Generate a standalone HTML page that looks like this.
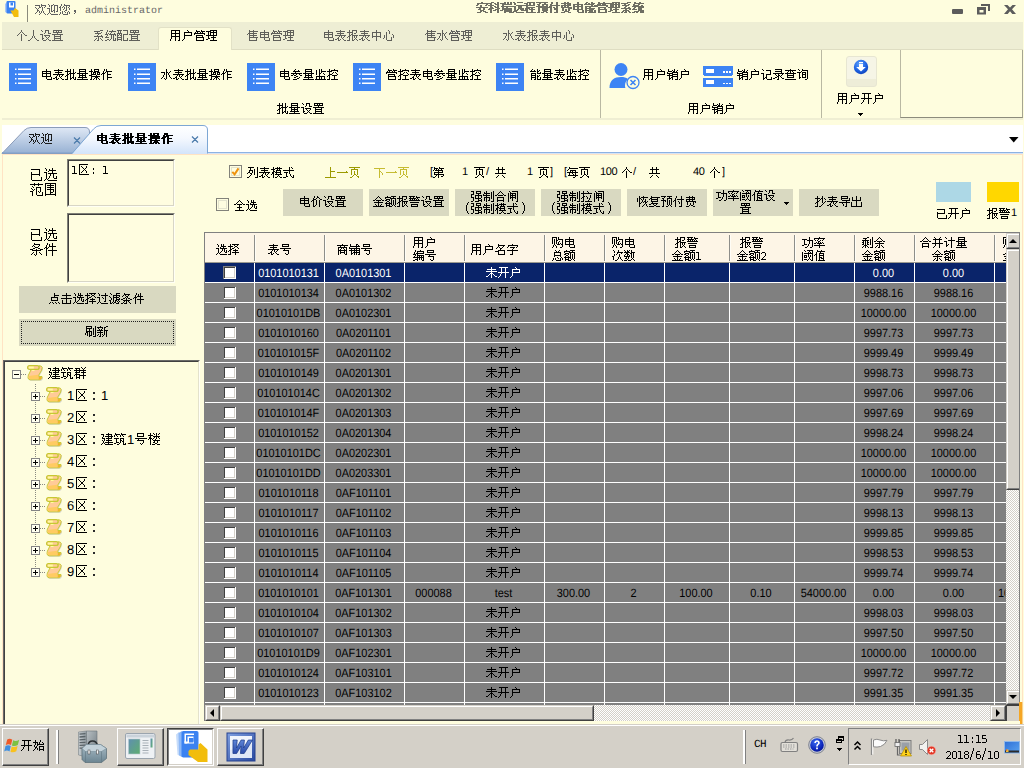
<!DOCTYPE html>
<html lang="zh-CN"><head><meta charset="utf-8"><title>安科瑞远程预付费电能管理系统</title>
<style>
html,body{margin:0;padding:0}
body{width:1024px;height:768px;overflow:hidden;background:#fefdde;position:relative;font-family:"Liberation Sans",sans-serif;font-size:12px}
div,span.h,svg.i{position:absolute;box-sizing:border-box}
.h{position:absolute;font-size:0;color:transparent;width:0;height:0;overflow:hidden;white-space:nowrap}
.l{white-space:nowrap;overflow:hidden;text-rendering:geometricPrecision}
#ov{position:absolute;left:0;top:0;pointer-events:none}
</style></head>
<body>
<svg class="i" style="left:3px;top:0px" width="18" height="19" viewBox="0 0 18 19">
<path d="M2 4l2-2v11l-2-1z" fill="#a9c8f6"/>
<rect x="3.5" y="1" width="9" height="12.5" rx="1" fill="#3b82f1"/>
<rect x="6" y="2.5" width="5" height="5" fill="#fff"/><rect x="7.5" y="2.5" width="2.5" height="3" fill="#3b82f1"/>
<path d="M7.5 10.5l3 0 1.5-2.5 3.5 2.5v6.5h-4.500z" fill="#f2bd0c"/>
</svg>
<div style="left:27px;top:5px;width:1px;height:17px;background:#8a8a7c;"></div>
<span class="h" style="left:35px;top:4px">欢迎您，</span>
<div class="l" style="left:85px;top:5px;width:90px;height:13px;line-height:13px;font-size:10px;color:#686868;text-align:left;font-family:'Liberation Mono',sans-serif;">administrator</div>
<span class="h" style="left:476px;top:2px">安科瑞远程预付费电能管理系统</span>
<svg class="i" style="left:948px;top:0px" width="72" height="20" viewBox="0 0 72 20">
<rect x="4" y="9" width="11" height="5" rx="1" fill="#5c5c5c"/>
<path d="M33 4h9v7h-2v-5h-7z M29 7h9v7.500h-9z M31.500 10v2.500h4v-2.500z" fill="#5c5c5c" fill-rule="evenodd"/>
<path d="M56 5l3.500 0 2.500 2.500 2.500-2.500 3.500 0-4 4.300 4 4.700-3.700 0-2.300-2.800-2.300 2.800-3.700 0 4-4.700z" fill="#5c5c5c"/>
</svg>
<div style="left:2px;top:22px;width:1021px;height:28px;background:#eeeed4;border-bottom:1px solid #deddc2;"></div>
<div style="left:158px;top:27px;width:74px;height:23px;background:#fefdde;border:1px solid #e2e1c6;border-bottom:none;border-radius:3px 3px 0 0;"></div>
<span class="h" style="left:16px;top:30px">个人设置</span>
<span class="h" style="left:93px;top:30px">系统配置</span>
<span class="h" style="left:170px;top:30px">用户管理</span>
<span class="h" style="left:247px;top:30px">售电管理</span>
<span class="h" style="left:323px;top:30px">电表报表中心</span>
<span class="h" style="left:425px;top:30px">售水管理</span>
<span class="h" style="left:503px;top:30px">水表报表中心</span>
<div style="left:2px;top:118px;width:1021px;height:2px;background:#efeed3;"></div>
<svg class="i" style="left:9px;top:63px" width="28" height="28" viewBox="0 0 28 28" ><rect width="28" height="28" fill="#3d84f4"/><path d="M6 5.500h1.500v1.500h-1.500zM9 5.500h13v1.500h-13zM6 10.500h1.500v1.500h-1.500zM9 10.500h13v1.500h-13zM6 15h1.500v1.500h-1.500zM9 15h13v1.500h-13zM6 19.500h1.500v1.500h-1.500zM9 19.500h13v1.500h-13z" fill="#fff"/></svg>
<span class="h" style="left:41px;top:69px">电表批量操作</span>
<svg class="i" style="left:128px;top:63px" width="28" height="28" viewBox="0 0 28 28" ><rect width="28" height="28" fill="#3d84f4"/><path d="M6 5.500h1.500v1.500h-1.500zM9 5.500h13v1.500h-13zM6 10.500h1.500v1.500h-1.500zM9 10.500h13v1.500h-13zM6 15h1.500v1.500h-1.500zM9 15h13v1.500h-13zM6 19.500h1.500v1.500h-1.500zM9 19.500h13v1.500h-13z" fill="#fff"/></svg>
<span class="h" style="left:161px;top:69px">水表批量操作</span>
<svg class="i" style="left:247px;top:63px" width="28" height="28" viewBox="0 0 28 28" ><rect width="28" height="28" fill="#3d84f4"/><path d="M6 5.500h1.500v1.500h-1.500zM9 5.500h13v1.500h-13zM6 10.500h1.500v1.500h-1.500zM9 10.500h13v1.500h-13zM6 15h1.500v1.500h-1.500zM9 15h13v1.500h-13zM6 19.500h1.500v1.500h-1.500zM9 19.500h13v1.500h-13z" fill="#fff"/></svg>
<span class="h" style="left:279px;top:69px">电参量监控</span>
<svg class="i" style="left:353px;top:63px" width="28" height="28" viewBox="0 0 28 28" ><rect width="28" height="28" fill="#3d84f4"/><path d="M6 5.500h1.500v1.500h-1.500zM9 5.500h13v1.500h-13zM6 10.500h1.500v1.500h-1.500zM9 10.500h13v1.500h-13zM6 15h1.500v1.500h-1.500zM9 15h13v1.500h-13zM6 19.500h1.500v1.500h-1.500zM9 19.500h13v1.500h-13z" fill="#fff"/></svg>
<span class="h" style="left:386px;top:69px">管控表电参量监控</span>
<svg class="i" style="left:496px;top:63px" width="28" height="28" viewBox="0 0 28 28" ><rect width="28" height="28" fill="#3d84f4"/><path d="M6 5.500h1.500v1.500h-1.500zM9 5.500h13v1.500h-13zM6 10.500h1.500v1.500h-1.500zM9 10.500h13v1.500h-13zM6 15h1.500v1.500h-1.500zM9 15h13v1.500h-13zM6 19.500h1.500v1.500h-1.500zM9 19.500h13v1.500h-13z" fill="#fff"/></svg>
<span class="h" style="left:530px;top:69px">能量表监控</span>
<span class="h" style="left:277px;top:103px">批量设置</span>
<div style="left:600px;top:50px;width:1px;height:68px;background:#b9b8a2;"></div>
<svg class="i" style="left:609px;top:62px" width="33" height="28" viewBox="0 0 33 28">
<circle cx="12" cy="7.500" r="6.500" fill="#3d84f4"/>
<path d="M0.500 26c0-8 5-11 11.500-11 3 0 5 .6 7 2-2 2-3 4-3 6.500 0 .9.100 1.700.400 2.500z" fill="#3d84f4"/>
<circle cx="24" cy="20.500" r="6" fill="#fefdde" stroke="#3d84f4" stroke-width="1.300"/>
<path d="M21.500 18l5 5M26.500 18l-5 5" stroke="#3d84f4" stroke-width="1.600"/>
</svg>
<span class="h" style="left:643px;top:69px">用户销户</span>
<svg class="i" style="left:703px;top:66px" width="31" height="22" viewBox="0 0 31 22" shape-rendering="crispEdges">
<rect x="0" y="0" width="30" height="9.500" rx="1" fill="#3d84f4"/><rect x="0" y="11.500" width="30" height="9.500" rx="1" fill="#3d84f4"/>
<rect x="3" y="2.500" width="8" height="4" fill="#fff"/><rect x="3" y="14" width="8" height="4" fill="#fff"/>
<path d="M20 5h1.500v1.500h-1.500zM23 5h1.500v1.500h-1.500zM26 5h1.500v1.500h-1.500zM20 16.500h1.500v1.500h-1.500zM23 16.500h1.500v1.500h-1.500zM26 16.500h1.500v1.500h-1.500z" fill="#fff"/>
</svg>
<span class="h" style="left:737px;top:69px">销户记录查询</span>
<span class="h" style="left:688px;top:103px">用户销户</span>
<div style="left:821px;top:50px;width:1px;height:68px;background:#b9b8a2;"></div>
<div style="left:846px;top:56px;width:31px;height:31px;background:#f5f4e4;border:1px solid #e7e6d2;border-radius:3px;background:linear-gradient(#f6f5e6 0,#f6f5e6 74%,#eeedd8 76%,#eeedd8 100%);"></div>
<svg class="i" style="left:853px;top:59px" width="16" height="16" viewBox="0 0 16 16">
<defs><radialGradient id="bl" cx="0.400" cy="0.300" r="0.800"><stop offset="0" stop-color="#5aa0ff"/><stop offset="0.600" stop-color="#1c5fe0"/><stop offset="1" stop-color="#0a3ab0"/></radialGradient></defs>
<circle cx="8" cy="8" r="7.200" fill="url(#bl)"/>
<path d="M6 3h4v1.200h-4zM6 5h4v3h2.800l-4.800 4.600-4.800-4.600h2.800z" fill="#fff"/></svg>
<span class="h" style="left:837px;top:93px">用户开户</span>
<svg class="i" style="left:858px;top:113px" width="6" height="4" viewBox="0 0 6 4" shape-rendering="crispEdges"><path d="M0 0h5l-2.500 3z" fill="#000"/></svg>
<div style="left:900px;top:50px;width:123px;height:68px;border-left:1px solid #b9b8a2;border-right:1px solid #a5a492;border-bottom:1px solid #8c8b7c;"></div>
<div style="left:2px;top:125px;width:1021px;height:28px;background:#fff;"></div>
<div style="left:2px;top:152px;width:1021px;height:1px;background:#8db2e3;"></div>
<div style="left:2px;top:153px;width:1021px;height:1px;background:#d6e4f5;"></div>
<svg class="i" style="left:0px;top:122px" width="212" height="33" viewBox="0 0 212 33">
<defs><linearGradient id="ti" x1="0" y1="0" x2="0" y2="1"><stop offset="0" stop-color="#dfe8f5"/><stop offset="1" stop-color="#97b1d3"/></linearGradient>
<linearGradient id="ta" x1="0" y1="0" x2="0" y2="1"><stop offset="0" stop-color="#ffffff"/><stop offset="0.450" stop-color="#f4f8fe"/><stop offset="1" stop-color="#d3e4fa"/></linearGradient></defs>
<path d="M2 31.500L24 8.500Q27 5.500 31 5.500L85 5.500Q89.500 5.500 89.500 10L89.500 31.500Z" fill="url(#ti)" stroke="#8b9cb9" stroke-width="1"/>
<path d="M2 31h88" stroke="#7f9fca" stroke-width="1"/>
<path d="M72 32L93.500 7Q96.500 3.500 101 3.500L203 3.500Q207.500 3.500 207.500 8L207.500 32Z" fill="url(#ta)"/>
<path d="M72 31.500L93.500 7Q96.500 3.500 101 3.500L203 3.500Q207.500 3.500 207.500 8L207.500 31.500" fill="none" stroke="#7da7d4" stroke-width="1"/>
<path d="M74 15.500l6 6M80 15.500l-6 6M192 14.500l6 6M198 14.500l-6 6" stroke="#4b7bab" stroke-width="1.200" fill="none"/>
</svg>
<span class="h" style="left:29px;top:133px">欢迎</span>
<span class="h" style="left:96px;top:133px">电表批量操作</span>
<svg class="i" style="left:1009px;top:137px" width="10" height="6" viewBox="0 0 10 6"><path d="M0 0h9.500l-4.750 5.500z" fill="#000"/></svg>
<div style="left:2px;top:154px;width:1021px;height:1px;background:#ffe3c4;"></div>
<div style="left:2px;top:154px;width:1px;height:570px;background:#ffe3c4;"></div>
<span class="h" style="left:30px;top:168px">已选</span>
<span class="h" style="left:30px;top:183px">范围</span>
<div style="left:67px;top:159px;width:108px;height:48px;background:#fffde0;border-top:1px solid #808078;border-left:1px solid #808078;border-right:1px solid #fffff4;border-bottom:1px solid #fffff4;"></div>
<div style="left:68px;top:160px;width:106px;height:46px;border-top:1px solid #404040;border-left:1px solid #404040;border-right:1px solid #d8d6c6;border-bottom:1px solid #d8d6c6;"></div>
<span class="h" style="left:72px;top:164px">1区</span>
<span class="h" style="left:91px;top:164px">:</span>
<span class="h" style="left:103px;top:164px">1</span>
<span class="h" style="left:30px;top:228px">已选</span>
<span class="h" style="left:30px;top:243px">条件</span>
<div style="left:67px;top:213px;width:108px;height:70px;background:#fffde0;border-top:1px solid #808078;border-left:1px solid #808078;border-right:1px solid #fffff4;border-bottom:1px solid #fffff4;"></div>
<div style="left:68px;top:214px;width:106px;height:68px;border-top:1px solid #404040;border-left:1px solid #404040;border-right:1px solid #d8d6c6;border-bottom:1px solid #d8d6c6;"></div>
<div style="left:19px;top:286px;width:157px;height:27px;background:#d9d9c1;"></div>
<span class="h" style="left:49px;top:293px">点击选择过滤条件</span>
<div style="left:19px;top:319px;width:157px;height:27px;background:#d9d9c1;"></div>
<div style="left:21px;top:321px;width:153px;height:23px;border:1px dotted #222;"></div>
<span class="h" style="left:85px;top:326px">刷新</span>
<div style="left:3px;top:360px;width:197px;height:364px;background:#fefdde;border-top:1px solid #6a6a68;border-left:1px solid #6a6a68;border-right:1px solid #fffff6;"></div>
<div style="left:4px;top:361px;width:195px;height:363px;border-top:1px solid #404040;border-left:1px solid #404040;border-right:1px solid #e4e2cc;"></div>
<svg class="i" style="left:12px;top:370px" width="9" height="9" viewBox="0 0 9 9" shape-rendering="crispEdges"><rect x="0.500" y="0.500" width="8" height="8" fill="#fffff0" stroke="#848484"/><path d="M2 4.500h5" stroke="#000"/></svg>
<div style="left:21px;top:374px;width:6px;height:1px;background-image:linear-gradient(90deg,#8a8a80 50%,transparent 50%);background-size:2px 1px;"></div>
<svg class="i" style="left:27px;top:365px" width="17" height="17" viewBox="0 0 17 17">
<path d="M5 5.500L13 5.500L13.300 1.500Q15.600 1.200 16 3.200Q16 5.800 13.800 8.800Q12.600 10.500 12.600 12L16 12.200Q16.400 14.300 14.300 15.800L4 16Q2 15.700 1.900 13.500Q1.900 11 3.300 9Z" fill="#b9bccb" opacity=".55"/>
<path d="M4.200 4.200L12 4.200L12 .8Q14.800 .6 15.200 2.500Q15.200 5 13 8Q11.500 10 11.500 11.500L15 11.500Q15.500 13.500 13.500 14.800L3 14.800Q1 14.500 1 12.500Q1 10 2.500 8Z" fill="#ffcb98" stroke="#c9cb35" stroke-width="1"/>
<path d="M1.500 11L11.300 9.800L11.500 14.300L3.200 14.300Q1.500 14 1.500 12.500Z" fill="#ffcb62"/>
<path d="M11.600 12L14.700 12Q15 13.700 13.200 14.400L11.600 14.400Z" fill="#eeb62c"/>
<rect x=".6" y=".6" width="11.400" height="3.800" rx="1.700" fill="#ffcb98" stroke="#c6c832" stroke-width="1.200"/>
<path d="M2 1.600h4.800v1.900h-4.800z" fill="#ffff9c"/><path d="M5 5h2.500v1h-2.500z" fill="#ffff9c"/>
</svg>
<span class="h" style="left:48px;top:367px">建筑群</span>
<div style="left:35px;top:383px;width:1px;height:185px;background-image:linear-gradient(0deg,#8a8a80 50%,transparent 50%);background-size:1px 2px;"></div>
<svg class="i" style="left:31px;top:392px" width="9" height="9" viewBox="0 0 9 9" shape-rendering="crispEdges"><rect x="0.500" y="0.500" width="8" height="8" fill="#fffff0" stroke="#848484"/><path d="M2 4.500h5" stroke="#000"/><path d="M4.500 2v5" stroke="#000"/></svg>
<div style="left:40px;top:396px;width:6px;height:1px;background-image:linear-gradient(90deg,#8a8a80 50%,transparent 50%);background-size:2px 1px;"></div>
<svg class="i" style="left:46px;top:387px" width="17" height="17" viewBox="0 0 17 17">
<path d="M5 5.500L13 5.500L13.300 1.500Q15.600 1.200 16 3.200Q16 5.800 13.800 8.800Q12.600 10.500 12.600 12L16 12.200Q16.400 14.300 14.300 15.800L4 16Q2 15.700 1.900 13.500Q1.900 11 3.300 9Z" fill="#b9bccb" opacity=".55"/>
<path d="M4.200 4.200L12 4.200L12 .8Q14.800 .6 15.200 2.500Q15.200 5 13 8Q11.500 10 11.500 11.500L15 11.500Q15.500 13.500 13.500 14.800L3 14.800Q1 14.500 1 12.500Q1 10 2.500 8Z" fill="#ffcb98" stroke="#c9cb35" stroke-width="1"/>
<path d="M1.500 11L11.300 9.800L11.500 14.300L3.200 14.300Q1.500 14 1.500 12.500Z" fill="#ffcb62"/>
<path d="M11.600 12L14.700 12Q15 13.700 13.200 14.400L11.600 14.400Z" fill="#eeb62c"/>
<rect x=".6" y=".6" width="11.400" height="3.800" rx="1.700" fill="#ffcb98" stroke="#c6c832" stroke-width="1.200"/>
<path d="M2 1.600h4.800v1.900h-4.800z" fill="#ffff9c"/><path d="M5 5h2.500v1h-2.500z" fill="#ffff9c"/>
</svg>
<div class="l" style="left:67px;top:387px;width:9px;height:17px;line-height:17px;font-size:13px;color:#000;text-align:left;font-family:'Liberation Sans',sans-serif;">1</div>
<span class="h" style="left:75px;top:388px">区</span>
<div style="left:93px;top:392px;width:2px;height:2px;background:#2a2a2a;"></div>
<div style="left:93px;top:398px;width:2px;height:2px;background:#2a2a2a;"></div>
<div class="l" style="left:101px;top:387px;width:9px;height:17px;line-height:17px;font-size:13px;color:#000;text-align:left;font-family:'Liberation Sans',sans-serif;">1</div>
<svg class="i" style="left:31px;top:414px" width="9" height="9" viewBox="0 0 9 9" shape-rendering="crispEdges"><rect x="0.500" y="0.500" width="8" height="8" fill="#fffff0" stroke="#848484"/><path d="M2 4.500h5" stroke="#000"/><path d="M4.500 2v5" stroke="#000"/></svg>
<div style="left:40px;top:418px;width:6px;height:1px;background-image:linear-gradient(90deg,#8a8a80 50%,transparent 50%);background-size:2px 1px;"></div>
<svg class="i" style="left:46px;top:409px" width="17" height="17" viewBox="0 0 17 17">
<path d="M5 5.500L13 5.500L13.300 1.500Q15.600 1.200 16 3.200Q16 5.800 13.800 8.800Q12.600 10.500 12.600 12L16 12.200Q16.400 14.300 14.300 15.800L4 16Q2 15.700 1.900 13.500Q1.900 11 3.300 9Z" fill="#b9bccb" opacity=".55"/>
<path d="M4.200 4.200L12 4.200L12 .8Q14.800 .6 15.200 2.500Q15.200 5 13 8Q11.500 10 11.500 11.500L15 11.500Q15.500 13.500 13.500 14.800L3 14.800Q1 14.500 1 12.500Q1 10 2.500 8Z" fill="#ffcb98" stroke="#c9cb35" stroke-width="1"/>
<path d="M1.500 11L11.300 9.800L11.500 14.300L3.200 14.300Q1.500 14 1.500 12.500Z" fill="#ffcb62"/>
<path d="M11.600 12L14.700 12Q15 13.700 13.200 14.400L11.600 14.400Z" fill="#eeb62c"/>
<rect x=".6" y=".6" width="11.400" height="3.800" rx="1.700" fill="#ffcb98" stroke="#c6c832" stroke-width="1.200"/>
<path d="M2 1.600h4.800v1.900h-4.800z" fill="#ffff9c"/><path d="M5 5h2.500v1h-2.500z" fill="#ffff9c"/>
</svg>
<div class="l" style="left:67px;top:409px;width:9px;height:17px;line-height:17px;font-size:13px;color:#000;text-align:left;font-family:'Liberation Sans',sans-serif;">2</div>
<span class="h" style="left:75px;top:410px">区</span>
<div style="left:93px;top:414px;width:2px;height:2px;background:#2a2a2a;"></div>
<div style="left:93px;top:420px;width:2px;height:2px;background:#2a2a2a;"></div>
<svg class="i" style="left:31px;top:436px" width="9" height="9" viewBox="0 0 9 9" shape-rendering="crispEdges"><rect x="0.500" y="0.500" width="8" height="8" fill="#fffff0" stroke="#848484"/><path d="M2 4.500h5" stroke="#000"/><path d="M4.500 2v5" stroke="#000"/></svg>
<div style="left:40px;top:440px;width:6px;height:1px;background-image:linear-gradient(90deg,#8a8a80 50%,transparent 50%);background-size:2px 1px;"></div>
<svg class="i" style="left:46px;top:431px" width="17" height="17" viewBox="0 0 17 17">
<path d="M5 5.500L13 5.500L13.300 1.500Q15.600 1.200 16 3.200Q16 5.800 13.800 8.800Q12.600 10.500 12.600 12L16 12.200Q16.400 14.300 14.300 15.800L4 16Q2 15.700 1.900 13.500Q1.900 11 3.300 9Z" fill="#b9bccb" opacity=".55"/>
<path d="M4.200 4.200L12 4.200L12 .8Q14.800 .6 15.200 2.500Q15.200 5 13 8Q11.500 10 11.500 11.500L15 11.500Q15.500 13.500 13.500 14.800L3 14.800Q1 14.500 1 12.500Q1 10 2.500 8Z" fill="#ffcb98" stroke="#c9cb35" stroke-width="1"/>
<path d="M1.500 11L11.300 9.800L11.500 14.300L3.200 14.300Q1.500 14 1.500 12.500Z" fill="#ffcb62"/>
<path d="M11.600 12L14.700 12Q15 13.700 13.200 14.400L11.600 14.400Z" fill="#eeb62c"/>
<rect x=".6" y=".6" width="11.400" height="3.800" rx="1.700" fill="#ffcb98" stroke="#c6c832" stroke-width="1.200"/>
<path d="M2 1.600h4.800v1.900h-4.800z" fill="#ffff9c"/><path d="M5 5h2.500v1h-2.500z" fill="#ffff9c"/>
</svg>
<div class="l" style="left:67px;top:431px;width:9px;height:17px;line-height:17px;font-size:13px;color:#000;text-align:left;font-family:'Liberation Sans',sans-serif;">3</div>
<span class="h" style="left:75px;top:432px">区</span>
<div style="left:93px;top:436px;width:2px;height:2px;background:#2a2a2a;"></div>
<div style="left:93px;top:442px;width:2px;height:2px;background:#2a2a2a;"></div>
<span class="h" style="left:101px;top:433px">建筑</span>
<div class="l" style="left:127px;top:431px;width:9px;height:17px;line-height:17px;font-size:13px;color:#000;text-align:left;font-family:'Liberation Sans',sans-serif;">1</div>
<span class="h" style="left:135px;top:433px">号楼</span>
<svg class="i" style="left:31px;top:458px" width="9" height="9" viewBox="0 0 9 9" shape-rendering="crispEdges"><rect x="0.500" y="0.500" width="8" height="8" fill="#fffff0" stroke="#848484"/><path d="M2 4.500h5" stroke="#000"/><path d="M4.500 2v5" stroke="#000"/></svg>
<div style="left:40px;top:462px;width:6px;height:1px;background-image:linear-gradient(90deg,#8a8a80 50%,transparent 50%);background-size:2px 1px;"></div>
<svg class="i" style="left:46px;top:453px" width="17" height="17" viewBox="0 0 17 17">
<path d="M5 5.500L13 5.500L13.300 1.500Q15.600 1.200 16 3.200Q16 5.800 13.800 8.800Q12.600 10.500 12.600 12L16 12.200Q16.400 14.300 14.300 15.800L4 16Q2 15.700 1.900 13.500Q1.900 11 3.300 9Z" fill="#b9bccb" opacity=".55"/>
<path d="M4.200 4.200L12 4.200L12 .8Q14.800 .6 15.200 2.500Q15.200 5 13 8Q11.500 10 11.500 11.500L15 11.500Q15.500 13.500 13.500 14.800L3 14.800Q1 14.500 1 12.500Q1 10 2.500 8Z" fill="#ffcb98" stroke="#c9cb35" stroke-width="1"/>
<path d="M1.500 11L11.300 9.800L11.500 14.300L3.200 14.300Q1.500 14 1.500 12.500Z" fill="#ffcb62"/>
<path d="M11.600 12L14.700 12Q15 13.700 13.200 14.400L11.600 14.400Z" fill="#eeb62c"/>
<rect x=".6" y=".6" width="11.400" height="3.800" rx="1.700" fill="#ffcb98" stroke="#c6c832" stroke-width="1.200"/>
<path d="M2 1.600h4.800v1.900h-4.800z" fill="#ffff9c"/><path d="M5 5h2.500v1h-2.500z" fill="#ffff9c"/>
</svg>
<div class="l" style="left:67px;top:453px;width:9px;height:17px;line-height:17px;font-size:13px;color:#000;text-align:left;font-family:'Liberation Sans',sans-serif;">4</div>
<span class="h" style="left:75px;top:454px">区</span>
<div style="left:93px;top:458px;width:2px;height:2px;background:#2a2a2a;"></div>
<div style="left:93px;top:464px;width:2px;height:2px;background:#2a2a2a;"></div>
<svg class="i" style="left:31px;top:480px" width="9" height="9" viewBox="0 0 9 9" shape-rendering="crispEdges"><rect x="0.500" y="0.500" width="8" height="8" fill="#fffff0" stroke="#848484"/><path d="M2 4.500h5" stroke="#000"/><path d="M4.500 2v5" stroke="#000"/></svg>
<div style="left:40px;top:484px;width:6px;height:1px;background-image:linear-gradient(90deg,#8a8a80 50%,transparent 50%);background-size:2px 1px;"></div>
<svg class="i" style="left:46px;top:475px" width="17" height="17" viewBox="0 0 17 17">
<path d="M5 5.500L13 5.500L13.300 1.500Q15.600 1.200 16 3.200Q16 5.800 13.800 8.800Q12.600 10.500 12.600 12L16 12.200Q16.400 14.300 14.300 15.800L4 16Q2 15.700 1.900 13.500Q1.900 11 3.300 9Z" fill="#b9bccb" opacity=".55"/>
<path d="M4.200 4.200L12 4.200L12 .8Q14.800 .6 15.200 2.500Q15.200 5 13 8Q11.500 10 11.500 11.500L15 11.500Q15.500 13.500 13.500 14.800L3 14.800Q1 14.500 1 12.500Q1 10 2.500 8Z" fill="#ffcb98" stroke="#c9cb35" stroke-width="1"/>
<path d="M1.500 11L11.300 9.800L11.500 14.300L3.200 14.300Q1.500 14 1.500 12.500Z" fill="#ffcb62"/>
<path d="M11.600 12L14.700 12Q15 13.700 13.200 14.400L11.600 14.400Z" fill="#eeb62c"/>
<rect x=".6" y=".6" width="11.400" height="3.800" rx="1.700" fill="#ffcb98" stroke="#c6c832" stroke-width="1.200"/>
<path d="M2 1.600h4.800v1.900h-4.800z" fill="#ffff9c"/><path d="M5 5h2.500v1h-2.500z" fill="#ffff9c"/>
</svg>
<div class="l" style="left:67px;top:475px;width:9px;height:17px;line-height:17px;font-size:13px;color:#000;text-align:left;font-family:'Liberation Sans',sans-serif;">5</div>
<span class="h" style="left:75px;top:476px">区</span>
<div style="left:93px;top:480px;width:2px;height:2px;background:#2a2a2a;"></div>
<div style="left:93px;top:486px;width:2px;height:2px;background:#2a2a2a;"></div>
<svg class="i" style="left:31px;top:502px" width="9" height="9" viewBox="0 0 9 9" shape-rendering="crispEdges"><rect x="0.500" y="0.500" width="8" height="8" fill="#fffff0" stroke="#848484"/><path d="M2 4.500h5" stroke="#000"/><path d="M4.500 2v5" stroke="#000"/></svg>
<div style="left:40px;top:506px;width:6px;height:1px;background-image:linear-gradient(90deg,#8a8a80 50%,transparent 50%);background-size:2px 1px;"></div>
<svg class="i" style="left:46px;top:497px" width="17" height="17" viewBox="0 0 17 17">
<path d="M5 5.500L13 5.500L13.300 1.500Q15.600 1.200 16 3.200Q16 5.800 13.800 8.800Q12.600 10.500 12.600 12L16 12.200Q16.400 14.300 14.300 15.800L4 16Q2 15.700 1.900 13.500Q1.900 11 3.300 9Z" fill="#b9bccb" opacity=".55"/>
<path d="M4.200 4.200L12 4.200L12 .8Q14.800 .6 15.200 2.500Q15.200 5 13 8Q11.500 10 11.500 11.500L15 11.500Q15.500 13.500 13.500 14.800L3 14.800Q1 14.500 1 12.500Q1 10 2.500 8Z" fill="#ffcb98" stroke="#c9cb35" stroke-width="1"/>
<path d="M1.500 11L11.300 9.800L11.500 14.300L3.200 14.300Q1.500 14 1.500 12.500Z" fill="#ffcb62"/>
<path d="M11.600 12L14.700 12Q15 13.700 13.200 14.400L11.600 14.400Z" fill="#eeb62c"/>
<rect x=".6" y=".6" width="11.400" height="3.800" rx="1.700" fill="#ffcb98" stroke="#c6c832" stroke-width="1.200"/>
<path d="M2 1.600h4.800v1.900h-4.800z" fill="#ffff9c"/><path d="M5 5h2.500v1h-2.500z" fill="#ffff9c"/>
</svg>
<div class="l" style="left:67px;top:497px;width:9px;height:17px;line-height:17px;font-size:13px;color:#000;text-align:left;font-family:'Liberation Sans',sans-serif;">6</div>
<span class="h" style="left:75px;top:498px">区</span>
<div style="left:93px;top:502px;width:2px;height:2px;background:#2a2a2a;"></div>
<div style="left:93px;top:508px;width:2px;height:2px;background:#2a2a2a;"></div>
<svg class="i" style="left:31px;top:524px" width="9" height="9" viewBox="0 0 9 9" shape-rendering="crispEdges"><rect x="0.500" y="0.500" width="8" height="8" fill="#fffff0" stroke="#848484"/><path d="M2 4.500h5" stroke="#000"/><path d="M4.500 2v5" stroke="#000"/></svg>
<div style="left:40px;top:528px;width:6px;height:1px;background-image:linear-gradient(90deg,#8a8a80 50%,transparent 50%);background-size:2px 1px;"></div>
<svg class="i" style="left:46px;top:519px" width="17" height="17" viewBox="0 0 17 17">
<path d="M5 5.500L13 5.500L13.300 1.500Q15.600 1.200 16 3.200Q16 5.800 13.800 8.800Q12.600 10.500 12.600 12L16 12.200Q16.400 14.300 14.300 15.800L4 16Q2 15.700 1.900 13.500Q1.900 11 3.300 9Z" fill="#b9bccb" opacity=".55"/>
<path d="M4.200 4.200L12 4.200L12 .8Q14.800 .6 15.200 2.500Q15.200 5 13 8Q11.500 10 11.500 11.500L15 11.500Q15.500 13.500 13.500 14.800L3 14.800Q1 14.500 1 12.500Q1 10 2.500 8Z" fill="#ffcb98" stroke="#c9cb35" stroke-width="1"/>
<path d="M1.500 11L11.300 9.800L11.500 14.300L3.200 14.300Q1.500 14 1.500 12.500Z" fill="#ffcb62"/>
<path d="M11.600 12L14.700 12Q15 13.700 13.200 14.400L11.600 14.400Z" fill="#eeb62c"/>
<rect x=".6" y=".6" width="11.400" height="3.800" rx="1.700" fill="#ffcb98" stroke="#c6c832" stroke-width="1.200"/>
<path d="M2 1.600h4.800v1.900h-4.800z" fill="#ffff9c"/><path d="M5 5h2.500v1h-2.500z" fill="#ffff9c"/>
</svg>
<div class="l" style="left:67px;top:519px;width:9px;height:17px;line-height:17px;font-size:13px;color:#000;text-align:left;font-family:'Liberation Sans',sans-serif;">7</div>
<span class="h" style="left:75px;top:520px">区</span>
<div style="left:93px;top:524px;width:2px;height:2px;background:#2a2a2a;"></div>
<div style="left:93px;top:530px;width:2px;height:2px;background:#2a2a2a;"></div>
<svg class="i" style="left:31px;top:546px" width="9" height="9" viewBox="0 0 9 9" shape-rendering="crispEdges"><rect x="0.500" y="0.500" width="8" height="8" fill="#fffff0" stroke="#848484"/><path d="M2 4.500h5" stroke="#000"/><path d="M4.500 2v5" stroke="#000"/></svg>
<div style="left:40px;top:550px;width:6px;height:1px;background-image:linear-gradient(90deg,#8a8a80 50%,transparent 50%);background-size:2px 1px;"></div>
<svg class="i" style="left:46px;top:541px" width="17" height="17" viewBox="0 0 17 17">
<path d="M5 5.500L13 5.500L13.300 1.500Q15.600 1.200 16 3.200Q16 5.800 13.800 8.800Q12.600 10.500 12.600 12L16 12.200Q16.400 14.300 14.300 15.800L4 16Q2 15.700 1.900 13.500Q1.900 11 3.300 9Z" fill="#b9bccb" opacity=".55"/>
<path d="M4.200 4.200L12 4.200L12 .8Q14.800 .6 15.200 2.500Q15.200 5 13 8Q11.500 10 11.500 11.500L15 11.500Q15.500 13.500 13.500 14.800L3 14.800Q1 14.500 1 12.500Q1 10 2.500 8Z" fill="#ffcb98" stroke="#c9cb35" stroke-width="1"/>
<path d="M1.500 11L11.300 9.800L11.500 14.300L3.200 14.300Q1.500 14 1.500 12.500Z" fill="#ffcb62"/>
<path d="M11.600 12L14.700 12Q15 13.700 13.200 14.400L11.600 14.400Z" fill="#eeb62c"/>
<rect x=".6" y=".6" width="11.400" height="3.800" rx="1.700" fill="#ffcb98" stroke="#c6c832" stroke-width="1.200"/>
<path d="M2 1.600h4.800v1.900h-4.800z" fill="#ffff9c"/><path d="M5 5h2.500v1h-2.500z" fill="#ffff9c"/>
</svg>
<div class="l" style="left:67px;top:541px;width:9px;height:17px;line-height:17px;font-size:13px;color:#000;text-align:left;font-family:'Liberation Sans',sans-serif;">8</div>
<span class="h" style="left:75px;top:542px">区</span>
<div style="left:93px;top:546px;width:2px;height:2px;background:#2a2a2a;"></div>
<div style="left:93px;top:552px;width:2px;height:2px;background:#2a2a2a;"></div>
<svg class="i" style="left:31px;top:568px" width="9" height="9" viewBox="0 0 9 9" shape-rendering="crispEdges"><rect x="0.500" y="0.500" width="8" height="8" fill="#fffff0" stroke="#848484"/><path d="M2 4.500h5" stroke="#000"/><path d="M4.500 2v5" stroke="#000"/></svg>
<div style="left:40px;top:572px;width:6px;height:1px;background-image:linear-gradient(90deg,#8a8a80 50%,transparent 50%);background-size:2px 1px;"></div>
<svg class="i" style="left:46px;top:563px" width="17" height="17" viewBox="0 0 17 17">
<path d="M5 5.500L13 5.500L13.300 1.500Q15.600 1.200 16 3.200Q16 5.800 13.800 8.800Q12.600 10.500 12.600 12L16 12.200Q16.400 14.300 14.300 15.800L4 16Q2 15.700 1.900 13.500Q1.900 11 3.300 9Z" fill="#b9bccb" opacity=".55"/>
<path d="M4.200 4.200L12 4.200L12 .8Q14.800 .6 15.200 2.500Q15.200 5 13 8Q11.500 10 11.500 11.500L15 11.500Q15.500 13.500 13.500 14.800L3 14.800Q1 14.500 1 12.500Q1 10 2.500 8Z" fill="#ffcb98" stroke="#c9cb35" stroke-width="1"/>
<path d="M1.500 11L11.300 9.800L11.500 14.300L3.200 14.300Q1.500 14 1.500 12.500Z" fill="#ffcb62"/>
<path d="M11.600 12L14.700 12Q15 13.700 13.200 14.400L11.600 14.400Z" fill="#eeb62c"/>
<rect x=".6" y=".6" width="11.400" height="3.800" rx="1.700" fill="#ffcb98" stroke="#c6c832" stroke-width="1.200"/>
<path d="M2 1.600h4.800v1.900h-4.800z" fill="#ffff9c"/><path d="M5 5h2.500v1h-2.500z" fill="#ffff9c"/>
</svg>
<div class="l" style="left:67px;top:563px;width:9px;height:17px;line-height:17px;font-size:13px;color:#000;text-align:left;font-family:'Liberation Sans',sans-serif;">9</div>
<span class="h" style="left:75px;top:564px">区</span>
<div style="left:93px;top:568px;width:2px;height:2px;background:#2a2a2a;"></div>
<div style="left:93px;top:574px;width:2px;height:2px;background:#2a2a2a;"></div>
<svg class="i" style="left:229px;top:165px" width="13" height="13" viewBox="0 0 13 13"><rect x="0.500" y="0.500" width="12" height="12" fill="#fefde0" stroke="#82827a"/><rect x="2.500" y="2.500" width="8" height="8" fill="none" stroke="#e3e3cd"/><path d="M3.300 6.800l2.300 2.600 3.900-6" stroke="#ee930e" stroke-width="2" fill="none"/></svg>
<span class="h" style="left:247px;top:167px">列表模式</span>
<span class="h" style="left:325px;top:167px">上一页</span>
<span class="h" style="left:374px;top:167px">下一页</span>
<div class="l" style="left:430px;top:166px;width:5px;height:13px;line-height:13px;font-size:11px;color:#000;text-align:left;font-family:'Liberation Sans',sans-serif;letter-spacing:-0.4px;">[</div>
<span class="h" style="left:433px;top:167px">第</span>
<div class="l" style="left:462px;top:166px;width:8px;height:13px;line-height:13px;font-size:11px;color:#000;text-align:left;font-family:'Liberation Sans',sans-serif;letter-spacing:-0.4px;">1</div>
<span class="h" style="left:474px;top:167px">页</span>
<div class="l" style="left:486px;top:166px;width:5px;height:13px;line-height:13px;font-size:11px;color:#000;text-align:left;font-family:'Liberation Sans',sans-serif;letter-spacing:-0.4px;">/</div>
<span class="h" style="left:495px;top:167px">共</span>
<div class="l" style="left:527px;top:166px;width:8px;height:13px;line-height:13px;font-size:11px;color:#000;text-align:left;font-family:'Liberation Sans',sans-serif;letter-spacing:-0.4px;">1</div>
<span class="h" style="left:538px;top:167px">页</span>
<div class="l" style="left:550px;top:166px;width:5px;height:13px;line-height:13px;font-size:11px;color:#000;text-align:left;font-family:'Liberation Sans',sans-serif;letter-spacing:-0.4px;">]</div>
<div class="l" style="left:564px;top:166px;width:5px;height:13px;line-height:13px;font-size:11px;color:#000;text-align:left;font-family:'Liberation Sans',sans-serif;letter-spacing:-0.4px;">[</div>
<span class="h" style="left:567px;top:167px">每页</span>
<div class="l" style="left:600px;top:166px;width:20px;height:13px;line-height:13px;font-size:11px;color:#000;text-align:left;font-family:'Liberation Sans',sans-serif;letter-spacing:-0.4px;">100</div>
<span class="h" style="left:621px;top:167px">个</span>
<div class="l" style="left:633px;top:166px;width:5px;height:13px;line-height:13px;font-size:11px;color:#000;text-align:left;font-family:'Liberation Sans',sans-serif;letter-spacing:-0.4px;">/</div>
<span class="h" style="left:649px;top:167px">共</span>
<div class="l" style="left:693px;top:166px;width:14px;height:13px;line-height:13px;font-size:11px;color:#000;text-align:left;font-family:'Liberation Sans',sans-serif;letter-spacing:-0.4px;">40</div>
<span class="h" style="left:709px;top:167px">个</span>
<div class="l" style="left:722px;top:166px;width:5px;height:13px;line-height:13px;font-size:11px;color:#000;text-align:left;font-family:'Liberation Sans',sans-serif;letter-spacing:-0.4px;">]</div>
<svg class="i" style="left:216px;top:198px" width="13" height="13" viewBox="0 0 13 13"><rect x="0.500" y="0.500" width="12" height="12" fill="#fefde0" stroke="#82827a"/><rect x="2.500" y="2.500" width="8" height="8" fill="none" stroke="#e3e3cd"/></svg>
<span class="h" style="left:234px;top:200px">全选</span>
<div style="left:283px;top:189px;width:80px;height:27px;background:#d9d9c1;"></div>
<div style="left:369px;top:189px;width:80px;height:27px;background:#d9d9c1;"></div>
<div style="left:455px;top:189px;width:80px;height:27px;background:#d9d9c1;"></div>
<div style="left:541px;top:189px;width:80px;height:27px;background:#d9d9c1;"></div>
<div style="left:627px;top:189px;width:80px;height:27px;background:#d9d9c1;"></div>
<div style="left:713px;top:189px;width:80px;height:27px;background:#d9d9c1;"></div>
<div style="left:799px;top:189px;width:80px;height:27px;background:#d9d9c1;"></div>
<span class="h" style="left:299px;top:196px">电价设置</span>
<span class="h" style="left:373px;top:196px">金额报警设置</span>
<span class="h" style="left:471px;top:191px">强制合闸</span>
<span class="h" style="left:459px;top:203px">（强制模式）</span>
<span class="h" style="left:557px;top:191px">强制拉闸</span>
<span class="h" style="left:545px;top:203px">（强制模式）</span>
<span class="h" style="left:637px;top:196px">恢复预付费</span>
<span class="h" style="left:716px;top:190px">功率阈值设</span>
<span class="h" style="left:740px;top:203px">置</span>
<svg class="i" style="left:784px;top:202px" width="6" height="4" viewBox="0 0 6 4" shape-rendering="crispEdges"><path d="M0 0h5l-2.500 3z" fill="#000"/></svg>
<span class="h" style="left:815px;top:196px">抄表导出</span>
<div style="left:936px;top:182px;width:35px;height:20px;background:#add8e6;"></div>
<div style="left:987px;top:182px;width:32px;height:20px;background:#ffd700;"></div>
<span class="h" style="left:936px;top:208px">已开户</span>
<span class="h" style="left:987px;top:208px">报警</span>
<div class="l" style="left:1011px;top:207px;width:8px;height:13px;line-height:13px;font-size:11px;color:#000;text-align:left;font-family:'Liberation Sans',sans-serif;">1</div>
<div style="left:204px;top:232px;width:816px;height:489px;background:#808080;"></div>
<div style="left:205px;top:233px;width:801px;height:30px;background:#fdf5e6;border-bottom:1px solid #9c9a90;"></div>
<div style="left:205px;top:263px;width:801px;height:19px;background:#0a246a;"></div>
<div style="left:205px;top:282px;width:801px;height:1px;background:#fff;"></div>
<div style="left:205px;top:302px;width:801px;height:1px;background:#fff;"></div>
<div style="left:205px;top:322px;width:801px;height:1px;background:#fff;"></div>
<div style="left:205px;top:342px;width:801px;height:1px;background:#fff;"></div>
<div style="left:205px;top:362px;width:801px;height:1px;background:#fff;"></div>
<div style="left:205px;top:382px;width:801px;height:1px;background:#fff;"></div>
<div style="left:205px;top:402px;width:801px;height:1px;background:#fff;"></div>
<div style="left:205px;top:422px;width:801px;height:1px;background:#fff;"></div>
<div style="left:205px;top:442px;width:801px;height:1px;background:#fff;"></div>
<div style="left:205px;top:462px;width:801px;height:1px;background:#fff;"></div>
<div style="left:205px;top:482px;width:801px;height:1px;background:#fff;"></div>
<div style="left:205px;top:502px;width:801px;height:1px;background:#fff;"></div>
<div style="left:205px;top:522px;width:801px;height:1px;background:#fff;"></div>
<div style="left:205px;top:542px;width:801px;height:1px;background:#fff;"></div>
<div style="left:205px;top:562px;width:801px;height:1px;background:#fff;"></div>
<div style="left:205px;top:582px;width:801px;height:1px;background:#fff;"></div>
<div style="left:205px;top:602px;width:801px;height:1px;background:#fff;"></div>
<div style="left:205px;top:622px;width:801px;height:1px;background:#fff;"></div>
<div style="left:205px;top:642px;width:801px;height:1px;background:#fff;"></div>
<div style="left:205px;top:662px;width:801px;height:1px;background:#fff;"></div>
<div style="left:205px;top:682px;width:801px;height:1px;background:#fff;"></div>
<div style="left:205px;top:702px;width:801px;height:1px;background:#fff;"></div>
<div style="left:254px;top:263px;width:1px;height:442px;background:#fff;"></div>
<div style="left:324px;top:263px;width:1px;height:442px;background:#fff;"></div>
<div style="left:404px;top:263px;width:1px;height:442px;background:#fff;"></div>
<div style="left:464px;top:263px;width:1px;height:442px;background:#fff;"></div>
<div style="left:544px;top:263px;width:1px;height:442px;background:#fff;"></div>
<div style="left:604px;top:263px;width:1px;height:442px;background:#fff;"></div>
<div style="left:664px;top:263px;width:1px;height:442px;background:#fff;"></div>
<div style="left:729px;top:263px;width:1px;height:442px;background:#fff;"></div>
<div style="left:794px;top:263px;width:1px;height:442px;background:#fff;"></div>
<div style="left:854px;top:263px;width:1px;height:442px;background:#fff;"></div>
<div style="left:914px;top:263px;width:1px;height:442px;background:#fff;"></div>
<div style="left:994px;top:263px;width:1px;height:442px;background:#fff;"></div>
<div style="left:254px;top:235px;width:1px;height:26px;background:#8e8e8a;"></div>
<div style="left:255px;top:235px;width:1px;height:26px;background:#fffdf6;"></div>
<div style="left:324px;top:235px;width:1px;height:26px;background:#8e8e8a;"></div>
<div style="left:325px;top:235px;width:1px;height:26px;background:#fffdf6;"></div>
<div style="left:404px;top:235px;width:1px;height:26px;background:#8e8e8a;"></div>
<div style="left:405px;top:235px;width:1px;height:26px;background:#fffdf6;"></div>
<div style="left:464px;top:235px;width:1px;height:26px;background:#8e8e8a;"></div>
<div style="left:465px;top:235px;width:1px;height:26px;background:#fffdf6;"></div>
<div style="left:544px;top:235px;width:1px;height:26px;background:#8e8e8a;"></div>
<div style="left:545px;top:235px;width:1px;height:26px;background:#fffdf6;"></div>
<div style="left:604px;top:235px;width:1px;height:26px;background:#8e8e8a;"></div>
<div style="left:605px;top:235px;width:1px;height:26px;background:#fffdf6;"></div>
<div style="left:664px;top:235px;width:1px;height:26px;background:#8e8e8a;"></div>
<div style="left:665px;top:235px;width:1px;height:26px;background:#fffdf6;"></div>
<div style="left:729px;top:235px;width:1px;height:26px;background:#8e8e8a;"></div>
<div style="left:730px;top:235px;width:1px;height:26px;background:#fffdf6;"></div>
<div style="left:794px;top:235px;width:1px;height:26px;background:#8e8e8a;"></div>
<div style="left:795px;top:235px;width:1px;height:26px;background:#fffdf6;"></div>
<div style="left:854px;top:235px;width:1px;height:26px;background:#8e8e8a;"></div>
<div style="left:855px;top:235px;width:1px;height:26px;background:#fffdf6;"></div>
<div style="left:914px;top:235px;width:1px;height:26px;background:#8e8e8a;"></div>
<div style="left:915px;top:235px;width:1px;height:26px;background:#fffdf6;"></div>
<div style="left:994px;top:235px;width:1px;height:26px;background:#8e8e8a;"></div>
<div style="left:995px;top:235px;width:1px;height:26px;background:#fffdf6;"></div>
<span class="h" style="left:216px;top:244px">选择</span>
<span class="h" style="left:268px;top:244px">表号</span>
<span class="h" style="left:337px;top:244px">商铺号</span>
<span class="h" style="left:413px;top:237px">用户</span>
<span class="h" style="left:413px;top:250px">编号</span>
<span class="h" style="left:471px;top:244px">用户名字</span>
<span class="h" style="left:552px;top:237px">购电</span>
<span class="h" style="left:552px;top:250px">总额</span>
<span class="h" style="left:612px;top:237px">购电</span>
<span class="h" style="left:612px;top:250px">次数</span>
<span class="h" style="left:675px;top:237px">报警</span>
<span class="h" style="left:672px;top:250px">金额1</span>
<span class="h" style="left:740px;top:237px">报警</span>
<span class="h" style="left:737px;top:250px">金额2</span>
<span class="h" style="left:802px;top:237px">功率</span>
<span class="h" style="left:802px;top:250px">阈值</span>
<span class="h" style="left:862px;top:237px">剩余</span>
<span class="h" style="left:862px;top:250px">金额</span>
<span class="h" style="left:920px;top:237px">合并计量</span>
<span class="h" style="left:932px;top:250px">余额</span>
<span class="h" style="left:1003px;top:237px">购</span>
<span class="h" style="left:1003px;top:250px">金</span>
<svg class="i" style="left:223px;top:266px" width="13" height="13" viewBox="0 0 13 13" shape-rendering="crispEdges"><rect width="13" height="13" fill="#fff"/><path d="M0 0h13v1h-12v12h-1z" fill="#808080"/><path d="M1 1h11v1h-10v10h-1z" fill="#404040"/><path d="M12 1v11h-11v1h12v-12z" fill="#fff"/><path d="M11 2v9h-9v1h10v-10z" fill="#d4d0c8"/></svg>
<div class="l" style="left:244px;top:264px;width:89px;height:19px;line-height:19px;font-size:12px;color:#fff;text-align:center;font-family:'Liberation Sans',sans-serif;transform:scaleX(0.91);">0101010131</div>
<div class="l" style="left:314px;top:264px;width:99px;height:19px;line-height:19px;font-size:12px;color:#fff;text-align:center;font-family:'Liberation Sans',sans-serif;transform:scaleX(0.91);">0A0101301</div>
<span class="h" style="left:486px;top:267px">未开户</span>
<div class="l" style="left:844px;top:264px;width:79px;height:19px;line-height:19px;font-size:12px;color:#fff;text-align:center;font-family:'Liberation Sans',sans-serif;transform:scaleX(0.91);">0.00</div>
<div class="l" style="left:904px;top:264px;width:99px;height:19px;line-height:19px;font-size:12px;color:#fff;text-align:center;font-family:'Liberation Sans',sans-serif;transform:scaleX(0.91);">0.00</div>
<svg class="i" style="left:223px;top:286px" width="13" height="13" viewBox="0 0 13 13" shape-rendering="crispEdges"><rect width="13" height="13" fill="#fff"/><path d="M0 0h13v1h-12v12h-1z" fill="#808080"/><path d="M1 1h11v1h-10v10h-1z" fill="#404040"/><path d="M12 1v11h-11v1h12v-12z" fill="#fff"/><path d="M11 2v9h-9v1h10v-10z" fill="#d4d0c8"/></svg>
<div class="l" style="left:244px;top:284px;width:89px;height:19px;line-height:19px;font-size:12px;color:#000;text-align:center;font-family:'Liberation Sans',sans-serif;transform:scaleX(0.91);">0101010134</div>
<div class="l" style="left:314px;top:284px;width:99px;height:19px;line-height:19px;font-size:12px;color:#000;text-align:center;font-family:'Liberation Sans',sans-serif;transform:scaleX(0.91);">0A0101302</div>
<span class="h" style="left:486px;top:287px">未开户</span>
<div class="l" style="left:844px;top:284px;width:79px;height:19px;line-height:19px;font-size:12px;color:#000;text-align:center;font-family:'Liberation Sans',sans-serif;transform:scaleX(0.91);">9988.16</div>
<div class="l" style="left:904px;top:284px;width:99px;height:19px;line-height:19px;font-size:12px;color:#000;text-align:center;font-family:'Liberation Sans',sans-serif;transform:scaleX(0.91);">9988.16</div>
<svg class="i" style="left:223px;top:306px" width="13" height="13" viewBox="0 0 13 13" shape-rendering="crispEdges"><rect width="13" height="13" fill="#fff"/><path d="M0 0h13v1h-12v12h-1z" fill="#808080"/><path d="M1 1h11v1h-10v10h-1z" fill="#404040"/><path d="M12 1v11h-11v1h12v-12z" fill="#fff"/><path d="M11 2v9h-9v1h10v-10z" fill="#d4d0c8"/></svg>
<div class="l" style="left:244px;top:304px;width:89px;height:19px;line-height:19px;font-size:12px;color:#000;text-align:center;font-family:'Liberation Sans',sans-serif;transform:scaleX(0.91);">01010101DB</div>
<div class="l" style="left:314px;top:304px;width:99px;height:19px;line-height:19px;font-size:12px;color:#000;text-align:center;font-family:'Liberation Sans',sans-serif;transform:scaleX(0.91);">0A0102301</div>
<span class="h" style="left:486px;top:307px">未开户</span>
<div class="l" style="left:844px;top:304px;width:79px;height:19px;line-height:19px;font-size:12px;color:#000;text-align:center;font-family:'Liberation Sans',sans-serif;transform:scaleX(0.91);">10000.00</div>
<div class="l" style="left:904px;top:304px;width:99px;height:19px;line-height:19px;font-size:12px;color:#000;text-align:center;font-family:'Liberation Sans',sans-serif;transform:scaleX(0.91);">10000.00</div>
<svg class="i" style="left:223px;top:326px" width="13" height="13" viewBox="0 0 13 13" shape-rendering="crispEdges"><rect width="13" height="13" fill="#fff"/><path d="M0 0h13v1h-12v12h-1z" fill="#808080"/><path d="M1 1h11v1h-10v10h-1z" fill="#404040"/><path d="M12 1v11h-11v1h12v-12z" fill="#fff"/><path d="M11 2v9h-9v1h10v-10z" fill="#d4d0c8"/></svg>
<div class="l" style="left:244px;top:324px;width:89px;height:19px;line-height:19px;font-size:12px;color:#000;text-align:center;font-family:'Liberation Sans',sans-serif;transform:scaleX(0.91);">0101010160</div>
<div class="l" style="left:314px;top:324px;width:99px;height:19px;line-height:19px;font-size:12px;color:#000;text-align:center;font-family:'Liberation Sans',sans-serif;transform:scaleX(0.91);">0A0201101</div>
<span class="h" style="left:486px;top:327px">未开户</span>
<div class="l" style="left:844px;top:324px;width:79px;height:19px;line-height:19px;font-size:12px;color:#000;text-align:center;font-family:'Liberation Sans',sans-serif;transform:scaleX(0.91);">9997.73</div>
<div class="l" style="left:904px;top:324px;width:99px;height:19px;line-height:19px;font-size:12px;color:#000;text-align:center;font-family:'Liberation Sans',sans-serif;transform:scaleX(0.91);">9997.73</div>
<svg class="i" style="left:223px;top:346px" width="13" height="13" viewBox="0 0 13 13" shape-rendering="crispEdges"><rect width="13" height="13" fill="#fff"/><path d="M0 0h13v1h-12v12h-1z" fill="#808080"/><path d="M1 1h11v1h-10v10h-1z" fill="#404040"/><path d="M12 1v11h-11v1h12v-12z" fill="#fff"/><path d="M11 2v9h-9v1h10v-10z" fill="#d4d0c8"/></svg>
<div class="l" style="left:244px;top:344px;width:89px;height:19px;line-height:19px;font-size:12px;color:#000;text-align:center;font-family:'Liberation Sans',sans-serif;transform:scaleX(0.91);">010101015F</div>
<div class="l" style="left:314px;top:344px;width:99px;height:19px;line-height:19px;font-size:12px;color:#000;text-align:center;font-family:'Liberation Sans',sans-serif;transform:scaleX(0.91);">0A0201102</div>
<span class="h" style="left:486px;top:347px">未开户</span>
<div class="l" style="left:844px;top:344px;width:79px;height:19px;line-height:19px;font-size:12px;color:#000;text-align:center;font-family:'Liberation Sans',sans-serif;transform:scaleX(0.91);">9999.49</div>
<div class="l" style="left:904px;top:344px;width:99px;height:19px;line-height:19px;font-size:12px;color:#000;text-align:center;font-family:'Liberation Sans',sans-serif;transform:scaleX(0.91);">9999.49</div>
<svg class="i" style="left:223px;top:366px" width="13" height="13" viewBox="0 0 13 13" shape-rendering="crispEdges"><rect width="13" height="13" fill="#fff"/><path d="M0 0h13v1h-12v12h-1z" fill="#808080"/><path d="M1 1h11v1h-10v10h-1z" fill="#404040"/><path d="M12 1v11h-11v1h12v-12z" fill="#fff"/><path d="M11 2v9h-9v1h10v-10z" fill="#d4d0c8"/></svg>
<div class="l" style="left:244px;top:364px;width:89px;height:19px;line-height:19px;font-size:12px;color:#000;text-align:center;font-family:'Liberation Sans',sans-serif;transform:scaleX(0.91);">0101010149</div>
<div class="l" style="left:314px;top:364px;width:99px;height:19px;line-height:19px;font-size:12px;color:#000;text-align:center;font-family:'Liberation Sans',sans-serif;transform:scaleX(0.91);">0A0201301</div>
<span class="h" style="left:486px;top:367px">未开户</span>
<div class="l" style="left:844px;top:364px;width:79px;height:19px;line-height:19px;font-size:12px;color:#000;text-align:center;font-family:'Liberation Sans',sans-serif;transform:scaleX(0.91);">9998.73</div>
<div class="l" style="left:904px;top:364px;width:99px;height:19px;line-height:19px;font-size:12px;color:#000;text-align:center;font-family:'Liberation Sans',sans-serif;transform:scaleX(0.91);">9998.73</div>
<svg class="i" style="left:223px;top:386px" width="13" height="13" viewBox="0 0 13 13" shape-rendering="crispEdges"><rect width="13" height="13" fill="#fff"/><path d="M0 0h13v1h-12v12h-1z" fill="#808080"/><path d="M1 1h11v1h-10v10h-1z" fill="#404040"/><path d="M12 1v11h-11v1h12v-12z" fill="#fff"/><path d="M11 2v9h-9v1h10v-10z" fill="#d4d0c8"/></svg>
<div class="l" style="left:244px;top:384px;width:89px;height:19px;line-height:19px;font-size:12px;color:#000;text-align:center;font-family:'Liberation Sans',sans-serif;transform:scaleX(0.91);">010101014C</div>
<div class="l" style="left:314px;top:384px;width:99px;height:19px;line-height:19px;font-size:12px;color:#000;text-align:center;font-family:'Liberation Sans',sans-serif;transform:scaleX(0.91);">0A0201302</div>
<span class="h" style="left:486px;top:387px">未开户</span>
<div class="l" style="left:844px;top:384px;width:79px;height:19px;line-height:19px;font-size:12px;color:#000;text-align:center;font-family:'Liberation Sans',sans-serif;transform:scaleX(0.91);">9997.06</div>
<div class="l" style="left:904px;top:384px;width:99px;height:19px;line-height:19px;font-size:12px;color:#000;text-align:center;font-family:'Liberation Sans',sans-serif;transform:scaleX(0.91);">9997.06</div>
<svg class="i" style="left:223px;top:406px" width="13" height="13" viewBox="0 0 13 13" shape-rendering="crispEdges"><rect width="13" height="13" fill="#fff"/><path d="M0 0h13v1h-12v12h-1z" fill="#808080"/><path d="M1 1h11v1h-10v10h-1z" fill="#404040"/><path d="M12 1v11h-11v1h12v-12z" fill="#fff"/><path d="M11 2v9h-9v1h10v-10z" fill="#d4d0c8"/></svg>
<div class="l" style="left:244px;top:404px;width:89px;height:19px;line-height:19px;font-size:12px;color:#000;text-align:center;font-family:'Liberation Sans',sans-serif;transform:scaleX(0.91);">010101014F</div>
<div class="l" style="left:314px;top:404px;width:99px;height:19px;line-height:19px;font-size:12px;color:#000;text-align:center;font-family:'Liberation Sans',sans-serif;transform:scaleX(0.91);">0A0201303</div>
<span class="h" style="left:486px;top:407px">未开户</span>
<div class="l" style="left:844px;top:404px;width:79px;height:19px;line-height:19px;font-size:12px;color:#000;text-align:center;font-family:'Liberation Sans',sans-serif;transform:scaleX(0.91);">9997.69</div>
<div class="l" style="left:904px;top:404px;width:99px;height:19px;line-height:19px;font-size:12px;color:#000;text-align:center;font-family:'Liberation Sans',sans-serif;transform:scaleX(0.91);">9997.69</div>
<svg class="i" style="left:223px;top:426px" width="13" height="13" viewBox="0 0 13 13" shape-rendering="crispEdges"><rect width="13" height="13" fill="#fff"/><path d="M0 0h13v1h-12v12h-1z" fill="#808080"/><path d="M1 1h11v1h-10v10h-1z" fill="#404040"/><path d="M12 1v11h-11v1h12v-12z" fill="#fff"/><path d="M11 2v9h-9v1h10v-10z" fill="#d4d0c8"/></svg>
<div class="l" style="left:244px;top:424px;width:89px;height:19px;line-height:19px;font-size:12px;color:#000;text-align:center;font-family:'Liberation Sans',sans-serif;transform:scaleX(0.91);">0101010152</div>
<div class="l" style="left:314px;top:424px;width:99px;height:19px;line-height:19px;font-size:12px;color:#000;text-align:center;font-family:'Liberation Sans',sans-serif;transform:scaleX(0.91);">0A0201304</div>
<span class="h" style="left:486px;top:427px">未开户</span>
<div class="l" style="left:844px;top:424px;width:79px;height:19px;line-height:19px;font-size:12px;color:#000;text-align:center;font-family:'Liberation Sans',sans-serif;transform:scaleX(0.91);">9998.24</div>
<div class="l" style="left:904px;top:424px;width:99px;height:19px;line-height:19px;font-size:12px;color:#000;text-align:center;font-family:'Liberation Sans',sans-serif;transform:scaleX(0.91);">9998.24</div>
<svg class="i" style="left:223px;top:446px" width="13" height="13" viewBox="0 0 13 13" shape-rendering="crispEdges"><rect width="13" height="13" fill="#fff"/><path d="M0 0h13v1h-12v12h-1z" fill="#808080"/><path d="M1 1h11v1h-10v10h-1z" fill="#404040"/><path d="M12 1v11h-11v1h12v-12z" fill="#fff"/><path d="M11 2v9h-9v1h10v-10z" fill="#d4d0c8"/></svg>
<div class="l" style="left:244px;top:444px;width:89px;height:19px;line-height:19px;font-size:12px;color:#000;text-align:center;font-family:'Liberation Sans',sans-serif;transform:scaleX(0.91);">01010101DC</div>
<div class="l" style="left:314px;top:444px;width:99px;height:19px;line-height:19px;font-size:12px;color:#000;text-align:center;font-family:'Liberation Sans',sans-serif;transform:scaleX(0.91);">0A0202301</div>
<span class="h" style="left:486px;top:447px">未开户</span>
<div class="l" style="left:844px;top:444px;width:79px;height:19px;line-height:19px;font-size:12px;color:#000;text-align:center;font-family:'Liberation Sans',sans-serif;transform:scaleX(0.91);">10000.00</div>
<div class="l" style="left:904px;top:444px;width:99px;height:19px;line-height:19px;font-size:12px;color:#000;text-align:center;font-family:'Liberation Sans',sans-serif;transform:scaleX(0.91);">10000.00</div>
<svg class="i" style="left:223px;top:466px" width="13" height="13" viewBox="0 0 13 13" shape-rendering="crispEdges"><rect width="13" height="13" fill="#fff"/><path d="M0 0h13v1h-12v12h-1z" fill="#808080"/><path d="M1 1h11v1h-10v10h-1z" fill="#404040"/><path d="M12 1v11h-11v1h12v-12z" fill="#fff"/><path d="M11 2v9h-9v1h10v-10z" fill="#d4d0c8"/></svg>
<div class="l" style="left:244px;top:464px;width:89px;height:19px;line-height:19px;font-size:12px;color:#000;text-align:center;font-family:'Liberation Sans',sans-serif;transform:scaleX(0.91);">01010101DD</div>
<div class="l" style="left:314px;top:464px;width:99px;height:19px;line-height:19px;font-size:12px;color:#000;text-align:center;font-family:'Liberation Sans',sans-serif;transform:scaleX(0.91);">0A0203301</div>
<span class="h" style="left:486px;top:467px">未开户</span>
<div class="l" style="left:844px;top:464px;width:79px;height:19px;line-height:19px;font-size:12px;color:#000;text-align:center;font-family:'Liberation Sans',sans-serif;transform:scaleX(0.91);">10000.00</div>
<div class="l" style="left:904px;top:464px;width:99px;height:19px;line-height:19px;font-size:12px;color:#000;text-align:center;font-family:'Liberation Sans',sans-serif;transform:scaleX(0.91);">10000.00</div>
<svg class="i" style="left:223px;top:486px" width="13" height="13" viewBox="0 0 13 13" shape-rendering="crispEdges"><rect width="13" height="13" fill="#fff"/><path d="M0 0h13v1h-12v12h-1z" fill="#808080"/><path d="M1 1h11v1h-10v10h-1z" fill="#404040"/><path d="M12 1v11h-11v1h12v-12z" fill="#fff"/><path d="M11 2v9h-9v1h10v-10z" fill="#d4d0c8"/></svg>
<div class="l" style="left:244px;top:484px;width:89px;height:19px;line-height:19px;font-size:12px;color:#000;text-align:center;font-family:'Liberation Sans',sans-serif;transform:scaleX(0.91);">0101010118</div>
<div class="l" style="left:314px;top:484px;width:99px;height:19px;line-height:19px;font-size:12px;color:#000;text-align:center;font-family:'Liberation Sans',sans-serif;transform:scaleX(0.91);">0AF101101</div>
<span class="h" style="left:486px;top:487px">未开户</span>
<div class="l" style="left:844px;top:484px;width:79px;height:19px;line-height:19px;font-size:12px;color:#000;text-align:center;font-family:'Liberation Sans',sans-serif;transform:scaleX(0.91);">9997.79</div>
<div class="l" style="left:904px;top:484px;width:99px;height:19px;line-height:19px;font-size:12px;color:#000;text-align:center;font-family:'Liberation Sans',sans-serif;transform:scaleX(0.91);">9997.79</div>
<svg class="i" style="left:223px;top:506px" width="13" height="13" viewBox="0 0 13 13" shape-rendering="crispEdges"><rect width="13" height="13" fill="#fff"/><path d="M0 0h13v1h-12v12h-1z" fill="#808080"/><path d="M1 1h11v1h-10v10h-1z" fill="#404040"/><path d="M12 1v11h-11v1h12v-12z" fill="#fff"/><path d="M11 2v9h-9v1h10v-10z" fill="#d4d0c8"/></svg>
<div class="l" style="left:244px;top:504px;width:89px;height:19px;line-height:19px;font-size:12px;color:#000;text-align:center;font-family:'Liberation Sans',sans-serif;transform:scaleX(0.91);">0101010117</div>
<div class="l" style="left:314px;top:504px;width:99px;height:19px;line-height:19px;font-size:12px;color:#000;text-align:center;font-family:'Liberation Sans',sans-serif;transform:scaleX(0.91);">0AF101102</div>
<span class="h" style="left:486px;top:507px">未开户</span>
<div class="l" style="left:844px;top:504px;width:79px;height:19px;line-height:19px;font-size:12px;color:#000;text-align:center;font-family:'Liberation Sans',sans-serif;transform:scaleX(0.91);">9998.13</div>
<div class="l" style="left:904px;top:504px;width:99px;height:19px;line-height:19px;font-size:12px;color:#000;text-align:center;font-family:'Liberation Sans',sans-serif;transform:scaleX(0.91);">9998.13</div>
<svg class="i" style="left:223px;top:526px" width="13" height="13" viewBox="0 0 13 13" shape-rendering="crispEdges"><rect width="13" height="13" fill="#fff"/><path d="M0 0h13v1h-12v12h-1z" fill="#808080"/><path d="M1 1h11v1h-10v10h-1z" fill="#404040"/><path d="M12 1v11h-11v1h12v-12z" fill="#fff"/><path d="M11 2v9h-9v1h10v-10z" fill="#d4d0c8"/></svg>
<div class="l" style="left:244px;top:524px;width:89px;height:19px;line-height:19px;font-size:12px;color:#000;text-align:center;font-family:'Liberation Sans',sans-serif;transform:scaleX(0.91);">0101010116</div>
<div class="l" style="left:314px;top:524px;width:99px;height:19px;line-height:19px;font-size:12px;color:#000;text-align:center;font-family:'Liberation Sans',sans-serif;transform:scaleX(0.91);">0AF101103</div>
<span class="h" style="left:486px;top:527px">未开户</span>
<div class="l" style="left:844px;top:524px;width:79px;height:19px;line-height:19px;font-size:12px;color:#000;text-align:center;font-family:'Liberation Sans',sans-serif;transform:scaleX(0.91);">9999.85</div>
<div class="l" style="left:904px;top:524px;width:99px;height:19px;line-height:19px;font-size:12px;color:#000;text-align:center;font-family:'Liberation Sans',sans-serif;transform:scaleX(0.91);">9999.85</div>
<svg class="i" style="left:223px;top:546px" width="13" height="13" viewBox="0 0 13 13" shape-rendering="crispEdges"><rect width="13" height="13" fill="#fff"/><path d="M0 0h13v1h-12v12h-1z" fill="#808080"/><path d="M1 1h11v1h-10v10h-1z" fill="#404040"/><path d="M12 1v11h-11v1h12v-12z" fill="#fff"/><path d="M11 2v9h-9v1h10v-10z" fill="#d4d0c8"/></svg>
<div class="l" style="left:244px;top:544px;width:89px;height:19px;line-height:19px;font-size:12px;color:#000;text-align:center;font-family:'Liberation Sans',sans-serif;transform:scaleX(0.91);">0101010115</div>
<div class="l" style="left:314px;top:544px;width:99px;height:19px;line-height:19px;font-size:12px;color:#000;text-align:center;font-family:'Liberation Sans',sans-serif;transform:scaleX(0.91);">0AF101104</div>
<span class="h" style="left:486px;top:547px">未开户</span>
<div class="l" style="left:844px;top:544px;width:79px;height:19px;line-height:19px;font-size:12px;color:#000;text-align:center;font-family:'Liberation Sans',sans-serif;transform:scaleX(0.91);">9998.53</div>
<div class="l" style="left:904px;top:544px;width:99px;height:19px;line-height:19px;font-size:12px;color:#000;text-align:center;font-family:'Liberation Sans',sans-serif;transform:scaleX(0.91);">9998.53</div>
<svg class="i" style="left:223px;top:566px" width="13" height="13" viewBox="0 0 13 13" shape-rendering="crispEdges"><rect width="13" height="13" fill="#fff"/><path d="M0 0h13v1h-12v12h-1z" fill="#808080"/><path d="M1 1h11v1h-10v10h-1z" fill="#404040"/><path d="M12 1v11h-11v1h12v-12z" fill="#fff"/><path d="M11 2v9h-9v1h10v-10z" fill="#d4d0c8"/></svg>
<div class="l" style="left:244px;top:564px;width:89px;height:19px;line-height:19px;font-size:12px;color:#000;text-align:center;font-family:'Liberation Sans',sans-serif;transform:scaleX(0.91);">0101010114</div>
<div class="l" style="left:314px;top:564px;width:99px;height:19px;line-height:19px;font-size:12px;color:#000;text-align:center;font-family:'Liberation Sans',sans-serif;transform:scaleX(0.91);">0AF101105</div>
<span class="h" style="left:486px;top:567px">未开户</span>
<div class="l" style="left:844px;top:564px;width:79px;height:19px;line-height:19px;font-size:12px;color:#000;text-align:center;font-family:'Liberation Sans',sans-serif;transform:scaleX(0.91);">9999.74</div>
<div class="l" style="left:904px;top:564px;width:99px;height:19px;line-height:19px;font-size:12px;color:#000;text-align:center;font-family:'Liberation Sans',sans-serif;transform:scaleX(0.91);">9999.74</div>
<svg class="i" style="left:223px;top:586px" width="13" height="13" viewBox="0 0 13 13" shape-rendering="crispEdges"><rect width="13" height="13" fill="#fff"/><path d="M0 0h13v1h-12v12h-1z" fill="#808080"/><path d="M1 1h11v1h-10v10h-1z" fill="#404040"/><path d="M12 1v11h-11v1h12v-12z" fill="#fff"/><path d="M11 2v9h-9v1h10v-10z" fill="#d4d0c8"/></svg>
<div class="l" style="left:244px;top:584px;width:89px;height:19px;line-height:19px;font-size:12px;color:#000;text-align:center;font-family:'Liberation Sans',sans-serif;transform:scaleX(0.91);">0101010101</div>
<div class="l" style="left:314px;top:584px;width:99px;height:19px;line-height:19px;font-size:12px;color:#000;text-align:center;font-family:'Liberation Sans',sans-serif;transform:scaleX(0.91);">0AF101301</div>
<div class="l" style="left:394px;top:584px;width:79px;height:19px;line-height:19px;font-size:12px;color:#000;text-align:center;font-family:'Liberation Sans',sans-serif;transform:scaleX(0.91);">000088</div>
<div class="l" style="left:454px;top:584px;width:99px;height:19px;line-height:19px;font-size:12px;color:#000;text-align:center;font-family:'Liberation Sans',sans-serif;transform:scaleX(0.91);">test</div>
<div class="l" style="left:534px;top:584px;width:79px;height:19px;line-height:19px;font-size:12px;color:#000;text-align:center;font-family:'Liberation Sans',sans-serif;transform:scaleX(0.91);">300.00</div>
<div class="l" style="left:594px;top:584px;width:79px;height:19px;line-height:19px;font-size:12px;color:#000;text-align:center;font-family:'Liberation Sans',sans-serif;transform:scaleX(0.91);">2</div>
<div class="l" style="left:654px;top:584px;width:84px;height:19px;line-height:19px;font-size:12px;color:#000;text-align:center;font-family:'Liberation Sans',sans-serif;transform:scaleX(0.91);">100.00</div>
<div class="l" style="left:719px;top:584px;width:84px;height:19px;line-height:19px;font-size:12px;color:#000;text-align:center;font-family:'Liberation Sans',sans-serif;transform:scaleX(0.91);">0.10</div>
<div class="l" style="left:784px;top:584px;width:79px;height:19px;line-height:19px;font-size:12px;color:#000;text-align:center;font-family:'Liberation Sans',sans-serif;transform:scaleX(0.91);">54000.00</div>
<div class="l" style="left:844px;top:584px;width:79px;height:19px;line-height:19px;font-size:12px;color:#000;text-align:center;font-family:'Liberation Sans',sans-serif;transform:scaleX(0.91);">0.00</div>
<div class="l" style="left:904px;top:584px;width:99px;height:19px;line-height:19px;font-size:12px;color:#000;text-align:center;font-family:'Liberation Sans',sans-serif;transform:scaleX(0.91);">0.00</div>
<svg class="i" style="left:223px;top:606px" width="13" height="13" viewBox="0 0 13 13" shape-rendering="crispEdges"><rect width="13" height="13" fill="#fff"/><path d="M0 0h13v1h-12v12h-1z" fill="#808080"/><path d="M1 1h11v1h-10v10h-1z" fill="#404040"/><path d="M12 1v11h-11v1h12v-12z" fill="#fff"/><path d="M11 2v9h-9v1h10v-10z" fill="#d4d0c8"/></svg>
<div class="l" style="left:244px;top:604px;width:89px;height:19px;line-height:19px;font-size:12px;color:#000;text-align:center;font-family:'Liberation Sans',sans-serif;transform:scaleX(0.91);">0101010104</div>
<div class="l" style="left:314px;top:604px;width:99px;height:19px;line-height:19px;font-size:12px;color:#000;text-align:center;font-family:'Liberation Sans',sans-serif;transform:scaleX(0.91);">0AF101302</div>
<span class="h" style="left:486px;top:607px">未开户</span>
<div class="l" style="left:844px;top:604px;width:79px;height:19px;line-height:19px;font-size:12px;color:#000;text-align:center;font-family:'Liberation Sans',sans-serif;transform:scaleX(0.91);">9998.03</div>
<div class="l" style="left:904px;top:604px;width:99px;height:19px;line-height:19px;font-size:12px;color:#000;text-align:center;font-family:'Liberation Sans',sans-serif;transform:scaleX(0.91);">9998.03</div>
<svg class="i" style="left:223px;top:626px" width="13" height="13" viewBox="0 0 13 13" shape-rendering="crispEdges"><rect width="13" height="13" fill="#fff"/><path d="M0 0h13v1h-12v12h-1z" fill="#808080"/><path d="M1 1h11v1h-10v10h-1z" fill="#404040"/><path d="M12 1v11h-11v1h12v-12z" fill="#fff"/><path d="M11 2v9h-9v1h10v-10z" fill="#d4d0c8"/></svg>
<div class="l" style="left:244px;top:624px;width:89px;height:19px;line-height:19px;font-size:12px;color:#000;text-align:center;font-family:'Liberation Sans',sans-serif;transform:scaleX(0.91);">0101010107</div>
<div class="l" style="left:314px;top:624px;width:99px;height:19px;line-height:19px;font-size:12px;color:#000;text-align:center;font-family:'Liberation Sans',sans-serif;transform:scaleX(0.91);">0AF101303</div>
<span class="h" style="left:486px;top:627px">未开户</span>
<div class="l" style="left:844px;top:624px;width:79px;height:19px;line-height:19px;font-size:12px;color:#000;text-align:center;font-family:'Liberation Sans',sans-serif;transform:scaleX(0.91);">9997.50</div>
<div class="l" style="left:904px;top:624px;width:99px;height:19px;line-height:19px;font-size:12px;color:#000;text-align:center;font-family:'Liberation Sans',sans-serif;transform:scaleX(0.91);">9997.50</div>
<svg class="i" style="left:223px;top:646px" width="13" height="13" viewBox="0 0 13 13" shape-rendering="crispEdges"><rect width="13" height="13" fill="#fff"/><path d="M0 0h13v1h-12v12h-1z" fill="#808080"/><path d="M1 1h11v1h-10v10h-1z" fill="#404040"/><path d="M12 1v11h-11v1h12v-12z" fill="#fff"/><path d="M11 2v9h-9v1h10v-10z" fill="#d4d0c8"/></svg>
<div class="l" style="left:244px;top:644px;width:89px;height:19px;line-height:19px;font-size:12px;color:#000;text-align:center;font-family:'Liberation Sans',sans-serif;transform:scaleX(0.91);">01010101D9</div>
<div class="l" style="left:314px;top:644px;width:99px;height:19px;line-height:19px;font-size:12px;color:#000;text-align:center;font-family:'Liberation Sans',sans-serif;transform:scaleX(0.91);">0AF102301</div>
<span class="h" style="left:486px;top:647px">未开户</span>
<div class="l" style="left:844px;top:644px;width:79px;height:19px;line-height:19px;font-size:12px;color:#000;text-align:center;font-family:'Liberation Sans',sans-serif;transform:scaleX(0.91);">10000.00</div>
<div class="l" style="left:904px;top:644px;width:99px;height:19px;line-height:19px;font-size:12px;color:#000;text-align:center;font-family:'Liberation Sans',sans-serif;transform:scaleX(0.91);">10000.00</div>
<svg class="i" style="left:223px;top:666px" width="13" height="13" viewBox="0 0 13 13" shape-rendering="crispEdges"><rect width="13" height="13" fill="#fff"/><path d="M0 0h13v1h-12v12h-1z" fill="#808080"/><path d="M1 1h11v1h-10v10h-1z" fill="#404040"/><path d="M12 1v11h-11v1h12v-12z" fill="#fff"/><path d="M11 2v9h-9v1h10v-10z" fill="#d4d0c8"/></svg>
<div class="l" style="left:244px;top:664px;width:89px;height:19px;line-height:19px;font-size:12px;color:#000;text-align:center;font-family:'Liberation Sans',sans-serif;transform:scaleX(0.91);">0101010124</div>
<div class="l" style="left:314px;top:664px;width:99px;height:19px;line-height:19px;font-size:12px;color:#000;text-align:center;font-family:'Liberation Sans',sans-serif;transform:scaleX(0.91);">0AF103101</div>
<span class="h" style="left:486px;top:667px">未开户</span>
<div class="l" style="left:844px;top:664px;width:79px;height:19px;line-height:19px;font-size:12px;color:#000;text-align:center;font-family:'Liberation Sans',sans-serif;transform:scaleX(0.91);">9997.72</div>
<div class="l" style="left:904px;top:664px;width:99px;height:19px;line-height:19px;font-size:12px;color:#000;text-align:center;font-family:'Liberation Sans',sans-serif;transform:scaleX(0.91);">9997.72</div>
<svg class="i" style="left:223px;top:686px" width="13" height="13" viewBox="0 0 13 13" shape-rendering="crispEdges"><rect width="13" height="13" fill="#fff"/><path d="M0 0h13v1h-12v12h-1z" fill="#808080"/><path d="M1 1h11v1h-10v10h-1z" fill="#404040"/><path d="M12 1v11h-11v1h12v-12z" fill="#fff"/><path d="M11 2v9h-9v1h10v-10z" fill="#d4d0c8"/></svg>
<div class="l" style="left:244px;top:684px;width:89px;height:19px;line-height:19px;font-size:12px;color:#000;text-align:center;font-family:'Liberation Sans',sans-serif;transform:scaleX(0.91);">0101010123</div>
<div class="l" style="left:314px;top:684px;width:99px;height:19px;line-height:19px;font-size:12px;color:#000;text-align:center;font-family:'Liberation Sans',sans-serif;transform:scaleX(0.91);">0AF103102</div>
<span class="h" style="left:486px;top:687px">未开户</span>
<div class="l" style="left:844px;top:684px;width:79px;height:19px;line-height:19px;font-size:12px;color:#000;text-align:center;font-family:'Liberation Sans',sans-serif;transform:scaleX(0.91);">9991.35</div>
<div class="l" style="left:904px;top:684px;width:99px;height:19px;line-height:19px;font-size:12px;color:#000;text-align:center;font-family:'Liberation Sans',sans-serif;transform:scaleX(0.91);">9991.35</div>
<div class="l" style="left:998px;top:584px;width:8px;height:19px;line-height:19px;font-size:12px;color:#000;text-align:left;font-family:'Liberation Sans',sans-serif;transform:scaleX(0.91);transform-origin:0 50%;">10</div>
<div style="left:205px;top:703px;width:801px;height:2px;background:#808080;"></div>
<div style="left:254px;top:703px;width:1px;height:2px;background:#fff;"></div>
<div style="left:324px;top:703px;width:1px;height:2px;background:#fff;"></div>
<div style="left:404px;top:703px;width:1px;height:2px;background:#fff;"></div>
<div style="left:464px;top:703px;width:1px;height:2px;background:#fff;"></div>
<div style="left:544px;top:703px;width:1px;height:2px;background:#fff;"></div>
<div style="left:604px;top:703px;width:1px;height:2px;background:#fff;"></div>
<div style="left:664px;top:703px;width:1px;height:2px;background:#fff;"></div>
<div style="left:729px;top:703px;width:1px;height:2px;background:#fff;"></div>
<div style="left:794px;top:703px;width:1px;height:2px;background:#fff;"></div>
<div style="left:854px;top:703px;width:1px;height:2px;background:#fff;"></div>
<div style="left:914px;top:703px;width:1px;height:2px;background:#fff;"></div>
<div style="left:994px;top:703px;width:1px;height:2px;background:#fff;"></div>
<div style="left:1006px;top:233px;width:13px;height:488px;overflow:hidden">
<div style="left:0px;top:0px;width:17px;height:472px;background-color:#fff;background-image:linear-gradient(45deg,#d4d0c8 25%,transparent 25%,transparent 75%,#d4d0c8 75%),linear-gradient(45deg,#d4d0c8 25%,transparent 25%,transparent 75%,#d4d0c8 75%);background-size:2px 2px;background-position:0 0,1px 1px;"></div>
<div style="left:0px;top:0px;width:17px;height:16px;background:#d4d0c8;border-top:1px solid #d4d0c8;border-left:1px solid #d4d0c8;border-right:1px solid #404040;border-bottom:1px solid #404040;"></div>
<div style="left:1px;top:1px;width:15px;height:14px;border-top:1px solid #fff;border-left:1px solid #fff;border-right:1px solid #808080;border-bottom:1px solid #808080;"></div>
<svg class="i" style="left:3px;top:6px" width="8" height="4" viewBox="0 0 8 4"><path d="M0 4l4-4 4 4z" fill="#000"/></svg>
<div style="left:0px;top:16px;width:17px;height:241px;background:#d4d0c8;border-top:1px solid #d4d0c8;border-left:1px solid #d4d0c8;border-right:1px solid #404040;border-bottom:1px solid #404040;"></div>
<div style="left:1px;top:17px;width:15px;height:239px;border-top:1px solid #fff;border-left:1px solid #fff;border-right:1px solid #808080;border-bottom:1px solid #808080;"></div>
<div style="left:0px;top:457px;width:17px;height:15px;background:#d4d0c8;border-top:1px solid #d4d0c8;border-left:1px solid #d4d0c8;border-right:1px solid #404040;border-bottom:1px solid #404040;"></div>
<div style="left:1px;top:458px;width:15px;height:13px;border-top:1px solid #fff;border-left:1px solid #fff;border-right:1px solid #808080;border-bottom:1px solid #808080;"></div>
<svg class="i" style="left:3px;top:462px" width="8" height="4" viewBox="0 0 8 4"><path d="M0 0h8l-4 4z" fill="#000"/></svg>
<div style="left:0px;top:472px;width:17px;height:16px;background:#d4d0c8;border-top:1px solid #404040;border-left:1px solid #404040;"></div>
</div>
<div style="left:205px;top:705px;width:801px;height:16px;background-color:#fff;background-image:linear-gradient(45deg,#d4d0c8 25%,transparent 25%,transparent 75%,#d4d0c8 75%),linear-gradient(45deg,#d4d0c8 25%,transparent 25%,transparent 75%,#d4d0c8 75%);background-size:2px 2px;background-position:0 0,1px 1px;"></div>
<div style="left:205px;top:705px;width:15px;height:16px;background:#d4d0c8;border-top:1px solid #d4d0c8;border-left:1px solid #d4d0c8;border-right:1px solid #404040;border-bottom:1px solid #404040;"></div>
<div style="left:206px;top:706px;width:13px;height:14px;border-top:1px solid #fff;border-left:1px solid #fff;border-right:1px solid #808080;border-bottom:1px solid #808080;"></div>
<svg class="i" style="left:210px;top:709px" width="4" height="8" viewBox="0 0 4 8"><path d="M4 0v8l-4-4z" fill="#000"/></svg>
<div style="left:220px;top:705px;width:374px;height:16px;background:#d4d0c8;border-top:1px solid #d4d0c8;border-left:1px solid #d4d0c8;border-right:1px solid #404040;border-bottom:1px solid #404040;"></div>
<div style="left:221px;top:706px;width:372px;height:14px;border-top:1px solid #fff;border-left:1px solid #fff;border-right:1px solid #808080;border-bottom:1px solid #808080;"></div>
<div style="left:990px;top:705px;width:16px;height:16px;background:#d4d0c8;border-top:1px solid #d4d0c8;border-left:1px solid #d4d0c8;border-right:1px solid #404040;border-bottom:1px solid #404040;"></div>
<div style="left:991px;top:706px;width:14px;height:14px;border-top:1px solid #fff;border-left:1px solid #fff;border-right:1px solid #808080;border-bottom:1px solid #808080;"></div>
<svg class="i" style="left:996px;top:709px" width="4" height="8" viewBox="0 0 4 8"><path d="M0 0l4 4-4 4z" fill="#000"/></svg>
<div style="left:1022px;top:154px;width:1px;height:570px;background:#ffe3c4;"></div>
<div style="left:1019px;top:702px;width:3px;height:22px;background:#f5a623;"></div>
<div style="left:1022px;top:702px;width:1px;height:22px;background:#f9cf8f;"></div>
<div style="left:204px;top:721px;width:816px;height:3px;background:#fefdde;"></div>
<div style="left:0px;top:724px;width:1024px;height:44px;background:#d4d0c8;"></div>
<div style="left:0px;top:725px;width:1024px;height:1px;background:#ffffff;"></div>
<div style="left:2px;top:728px;width:47px;height:38px;background:#d4d0c8;border-top:1px solid #fff;border-left:1px solid #fff;border-right:1px solid #404040;border-bottom:1px solid #404040;"></div>
<div style="left:3px;top:729px;width:45px;height:36px;border-right:1px solid #808080;border-bottom:1px solid #808080;"></div>
<svg class="i" style="left:4px;top:738px" width="16" height="15" viewBox="0 0 16 15">
<path d="M3.200 1.600Q5.800 -.2 8.300 1.800L7 7Q4.600 5.300 1.800 7Z" fill="#ee5a28"/>
<path d="M9.200 2.300Q11.800 3.800 15.200 1.700L13.800 7Q10.600 8.800 7.900 7.400Z" fill="#7cc142"/>
<path d="M1.500 8Q4.300 6.300 6.800 8L5.500 13.400Q3 11.800 .2 13.400Z" fill="#3f8fe0"/>
<path d="M7.700 8.400Q10.300 9.900 13.600 8L12.300 13.300Q9.200 15.100 6.500 13.800Z" fill="#f9c11c"/></svg>
<span class="h" style="left:21px;top:740px">开始</span>
<div style="left:56px;top:730px;width:1px;height:34px;background:#fff;"></div>
<div style="left:57px;top:730px;width:1px;height:34px;background:#fff;"></div>
<div style="left:58px;top:730px;width:1px;height:34px;background:#808080;"></div>
<svg class="i" style="left:77px;top:730px" width="31" height="34" viewBox="0 0 31 34">
<defs><linearGradient id="sv" x1="0" y1="0" x2="1" y2="0"><stop offset="0" stop-color="#c8ced2"/><stop offset="1" stop-color="#8e989e"/></linearGradient>
<linearGradient id="sv2" x1="0" y1="0" x2="1" y2="1"><stop offset="0" stop-color="#b9c0c4"/><stop offset="1" stop-color="#6f7a80"/></linearGradient>
<linearGradient id="tb" x1="0" y1="0" x2="0" y2="1"><stop offset="0" stop-color="#a9bcc6"/><stop offset="1" stop-color="#6c8592"/></linearGradient></defs>
<path d="M1.500 2L9.500 1V27L1.500 25z" fill="url(#sv)" stroke="#7a8388" stroke-width=".6"/>
<path d="M9.500 1h10.500v24h-10.500z" fill="url(#sv2)" stroke="#6a7378" stroke-width=".6"/>
<path d="M2.500 4.200l6-.6M2.500 7l6-.5M2.500 9.800l6-.4M2.500 12.600l6-.3M2.500 15.400l6-.2M2.500 18.200h6" stroke="#5a6368" stroke-width="1.300"/>
<path d="M11 15.500Q11.500 11 15.500 11Q19.500 11 20.500 15.500" fill="none" stroke="#2b3134" stroke-width="1.500"/>
<path d="M5 18.500L9.500 14.500H23.500L29.500 18.500V28.500L24.500 32.500H8L5 29.500z" fill="url(#tb)" stroke="#566a74" stroke-width=".7"/>
<path d="M5 18.500L8.500 21.500H24.500L29.500 18.500L23.500 14.500H9.500z" fill="#c3d2da" stroke="#6f8590" stroke-width=".5"/>
<path d="M8.500 21.500V32M24.500 21.500V32.500" stroke="#5f7682" stroke-width=".6"/>
<rect x="11" y="20" width="2" height="4" fill="#f6f6f6" stroke="#444" stroke-width=".5"/><rect x="19.500" y="20" width="2" height="4" fill="#f6f6f6" stroke="#444" stroke-width=".5"/>
</svg>
<div style="left:117px;top:728px;width:47px;height:38px;background:#d4d0c8;border-top:1px solid #fff;border-left:1px solid #fff;border-right:1px solid #404040;border-bottom:1px solid #404040;"></div>
<div style="left:118px;top:729px;width:45px;height:36px;border-right:1px solid #808080;border-bottom:1px solid #808080;"></div>
<svg class="i" style="left:125px;top:733px" width="31" height="27" viewBox="0 0 31 27">
<defs><linearGradient id="wg" x1="0" y1="0" x2="1" y2="1"><stop offset="0" stop-color="#5f8fb0"/><stop offset="1" stop-color="#5fae70"/></linearGradient></defs>
<rect x=".5" y=".5" width="29.500" height="25" rx="1.500" fill="#eef1f4" stroke="#9aa4ae"/>
<rect x="1.500" y="1.500" width="27.500" height="3" fill="#c9d2da"/>
<rect x="3.500" y="6" width="11.500" height="15" fill="url(#wg)" stroke="#b8c8d0" stroke-width=".6"/>
<path d="M17.500 7.500h6M17.500 10h6M17.500 12.500h6M17.500 15h6M17.500 17.500h6M17.500 20h6" stroke="#a9b1b8" stroke-width="1"/>
<rect x="25.500" y="5.500" width="2" height="9" fill="url(#wg)"/></svg>
<div style="left:167px;top:728px;width:47px;height:38px;background:#fff;border-top:1px solid #404040;border-left:1px solid #404040;border-right:1px solid #fff;border-bottom:1px solid #fff;"></div>
<div style="left:168px;top:729px;width:45px;height:36px;border-top:1px solid #808080;border-left:1px solid #808080;border-right:1px solid #d4d0c8;border-bottom:1px solid #d4d0c8;"></div>
<svg class="i" style="left:175px;top:730px" width="34" height="34" viewBox="0 0 34 34">
<path d="M1 4.500l3-2.500v23.500l-1.500-.8z" fill="#c6dcfa"/><path d="M3.500 3l3.500-2v26l-3-1.500z" fill="#8db8f6"/>
<rect x="6.500" y="1" width="17" height="26.500" rx="1.800" fill="#3b82f1"/>
<path d="M9.500 3.500h9.500v10h-9.500z" fill="#fff"/><path d="M11 5h8v6.500h-8z" fill="#3b82f1"/><path d="M12.500 6.500h6v5.500h-6z" fill="#fff"/><path d="M14 8h4.500v4.500h-4.500z" fill="#3b82f1"/>
<path d="M9.500 13.500v-3l3 3z" fill="#fff"/>
<path d="M13.500 21l1.500-1.500h8.500v-5l2-1.500 7 6.500v12.500h-9.500l-9.500-7z" fill="#f2bd0c"/></svg>
<div style="left:217px;top:728px;width:47px;height:38px;background:#d4d0c8;border-top:1px solid #fff;border-left:1px solid #fff;border-right:1px solid #404040;border-bottom:1px solid #404040;"></div>
<div style="left:218px;top:729px;width:45px;height:36px;border-right:1px solid #808080;border-bottom:1px solid #808080;"></div>
<svg class="i" style="left:226px;top:732px" width="30" height="30" viewBox="0 0 30 30">
<defs><linearGradient id="wd" x1="0" y1="0" x2="1" y2="1"><stop offset="0" stop-color="#7fa0e0"/><stop offset="1" stop-color="#2848a0"/></linearGradient>
<linearGradient id="ww" x1="0" y1="0" x2="0" y2="1"><stop offset="0" stop-color="#5f86d8"/><stop offset="1" stop-color="#2a4aa8"/></linearGradient></defs>
<rect x="1" y="1" width="28" height="28" fill="url(#wd)" stroke="#24408f" stroke-width="1"/>
<rect x="4" y="4" width="22" height="22" fill="#f1f5fc"/><path d="M4 18L26 12V26H4z" fill="#dfe7f6"/>
<path transform="translate(3.500 0) skewX(-14)" d="M5.500 8h4.200l1.300 8 2.600-8h3.300l1.200 8 2.700-8h4.200l-5 13.500h-3.700l-1.300-7.500-2.500 7.500h-3.700z" fill="url(#ww)" stroke="#1d3c8a" stroke-width=".7"/></svg>
<div style="left:743px;top:730px;width:1px;height:34px;background:#fff;"></div>
<div style="left:744px;top:730px;width:1px;height:34px;background:#fff;"></div>
<div style="left:745px;top:730px;width:1px;height:34px;background:#808080;"></div>
<div class="l" style="left:754px;top:738px;width:16px;height:14px;line-height:14px;font-size:11px;color:#000;text-align:left;font-family:'Liberation Mono',sans-serif;letter-spacing:-0.6px;">CH</div>
<svg class="i" style="left:780px;top:737px" width="19" height="16" viewBox="0 0 19 16">
<path d="M5 5.500Q5.500 2.500 9 3Q12 3.300 13.500 1" fill="none" stroke="#808080" stroke-width="1.200"/>
<rect x="1" y="5.500" width="16.500" height="9" rx="1.500" fill="#e2dfd8" stroke="#808080" stroke-width="1.200"/>
<path d="M3 8h12.500M3 10h12.500M5 12h8.500" stroke="#9a9a9a" stroke-width="1" stroke-dasharray="1.500 1"/></svg>
<svg class="i" style="left:808px;top:736px" width="18" height="18" viewBox="0 0 18 18">
<defs><radialGradient id="hp" cx=".4" cy=".3" r=".8"><stop offset="0" stop-color="#3a6af0"/><stop offset=".7" stop-color="#0a22b8"/><stop offset="1" stop-color="#06127a"/></radialGradient></defs>
<circle cx="9" cy="9" r="8.300" fill="#c8ccd8" stroke="#6a7080" stroke-width=".8"/><circle cx="9" cy="9" r="6.800" fill="url(#hp)"/>
<path d="M6.300 7Q6.500 4.300 9.200 4.300Q11.800 4.400 11.800 6.700Q11.800 8 10.500 8.800Q9.800 9.300 9.800 10.500H8.200Q8.100 8.800 9.300 8Q10.100 7.400 10.100 6.700Q10 5.700 9.100 5.700Q8 5.800 7.900 7Z M8.100 11.500h1.800v1.800h-1.800z" fill="#fff"/></svg>
<svg class="i" style="left:835px;top:735px" width="10" height="17" viewBox="0 0 10 17" shape-rendering="crispEdges">
<path d="M3 1h6v5h-2v-1h1v-2h-4v1h-1z M1 4h6v4h-6z M2 6v1h4v-1z" fill="#000" fill-rule="evenodd"/>
<path d="M2 13h5l-2.500 3z" fill="#000"/></svg>
<div style="left:848px;top:728px;width:173px;height:37px;border-top:1px solid #808080;border-left:1px solid #808080;border-right:1px solid #fff;border-bottom:1px solid #fff;"></div>
<svg class="i" style="left:853px;top:740px" width="9" height="11" viewBox="0 0 9 11"><path d="M1.500 5L4.500 2l3 3M1.500 9.500L4.500 6.500l3 3" fill="none" stroke="#000" stroke-width="1.500"/></svg>
<svg class="i" style="left:869px;top:737px" width="20" height="19" viewBox="0 0 20 19">
<path d="M2.500 1.500v16.500" stroke="#8a8a8a" stroke-width="1.300"/><path d="M3.800 2.500v15" stroke="#fff" stroke-width="1"/>
<path d="M4.500 3Q8 1.500 11 3Q14.500 4.500 18 3.300Q16 8 11.500 9.500Q8 10.500 4.500 9.800Z" fill="#fbfbfb" stroke="#8a8a8a" stroke-width="1"/></svg>
<svg class="i" style="left:894px;top:738px" width="19" height="19" viewBox="0 0 19 19">
<rect x="5.500" y="2.500" width="11.500" height="13" fill="#c6c6c2" stroke="#7c7c7c"/><rect x="7.500" y="4.500" width="8" height="8" fill="#9aa0a8"/>
<path d="M2 1v4.500M5 1v4.500" stroke="#555" stroke-width="1.200"/><rect x="1" y="4.500" width="5" height="4" fill="#eee" stroke="#666" stroke-width=".8"/><path d="M3.500 8.500v8.500h3" fill="none" stroke="#666" stroke-width="1.200"/>
<path d="M12 8.500l5.500 9.500h-11z" fill="#ffd21a" stroke="#b08a00" stroke-width=".7"/><path d="M12 11.500v3.500M12 16v1" stroke="#000" stroke-width="1.200"/></svg>
<svg class="i" style="left:918px;top:738px" width="19" height="19" viewBox="0 0 19 19">
<path d="M1.500 6.500h3l5-5v15l-5-5h-3z" fill="#f2f2f0" stroke="#8a8a8a" stroke-width="1"/>
<circle cx="13.500" cy="12.500" r="4.300" fill="#e23524" stroke="#f6b8b0" stroke-width=".6"/><path d="M11.700 10.700l3.600 3.600M15.300 10.700l-3.600 3.600" stroke="#fff" stroke-width="1.400"/></svg>
<span class="h" style="left:958px;top:733px">11:15</span>
<span class="h" style="left:946px;top:749px">2018/6/10</span>
<svg class="i" style="left:1004px;top:741px" width="17" height="14" viewBox="0 0 17 14">
<defs><linearGradient id="sd" x1="0" y1="0" x2="1" y2="1"><stop offset="0" stop-color="#2f6fd6"/><stop offset="1" stop-color="#5aa4f0"/></linearGradient></defs>
<rect x=".5" y=".5" width="15" height="11.500" fill="url(#sd)" stroke="#8fb8ea"/>
<rect x="1" y="9.500" width="14" height="2" fill="#2b2b2b"/><rect x="2" y="8.500" width="2.500" height="2.500" fill="#f2c23a"/><rect x="2" y="8.500" width="1.200" height="1.200" fill="#e8502a"/></svg>
<svg id="ov" width="1024" height="768" viewBox="0 0 1024 768" shape-rendering="crispEdges"><defs><path id="a2f" d="M0 8h1v3h-1zM1 5h1v3h-1zM2 2h1v3h-1zM3 -1h1v3h-1z"/><path id="a30" d="M0 3h1v6h-1zM1 2h3v1h-3zM1 9h3v1h-3zM4 3h1v6h-1z"/><path id="a31" d="M0 2h3v1h-3zM0 9h5v1h-5zM2 3h1v6h-1z"/><path id="a32" d="M0 3h1v1h-1zM0 9h5v1h-5zM1 8h1v1h-1zM1 2h3v1h-3zM2 7h1v1h-1zM3 6h1v1h-1zM4 3h1v3h-1z"/><path id="a35" d="M0 3h1v2h-1zM0 2h4v1h-4zM0 5h4v1h-4zM0 9h4v1h-4zM4 6h1v3h-1z"/><path id="a36" d="M0 3h1v2h-1zM0 6h1v3h-1zM0 5h4v1h-4zM1 2h3v1h-3zM1 9h3v1h-3zM4 6h1v3h-1z"/><path id="a38" d="M0 3h1v2h-1zM0 6h1v3h-1zM1 2h3v1h-3zM1 5h3v1h-3zM1 9h3v1h-3zM4 3h1v2h-1zM4 6h1v3h-1z"/><path id="a3a" d="M0 4h1v2h-1zM0 8h1v2h-1z"/><path id="a4e00" d="M0 5h11v1h-11zM9 4h1v1h-1z"/><path id="a4e0a" d="M0 10h11v1h-11zM5 0h1v4h-1zM5 5h1v5h-1zM5 4h5v1h-5z"/><path id="a4e0b" d="M0 1h11v1h-11zM5 2h1v2h-1zM5 5h1v6h-1zM5 4h2v1h-2zM7 5h1v1h-1zM8 6h1v2h-1z"/><path id="a4e2a" d="M1 5h1v1h-1zM2 4h1v1h-1zM3 3h1v1h-1zM4 2h1v1h-1zM5 0h1v2h-1zM5 4h1v7h-1zM6 2h1v1h-1zM7 3h1v1h-1zM8 4h1v1h-1zM9 5h2v1h-2z"/><path id="a4e2d" d="M1 3h1v3h-1zM1 7h1v1h-1zM1 2h9v1h-9zM1 6h9v1h-9zM5 0h1v2h-1zM5 3h1v3h-1zM5 7h1v4h-1zM9 3h1v3h-1zM9 7h1v1h-1z"/><path id="a4eba" d="M0 10h2v1h-2zM2 9h1v1h-1zM3 8h1v1h-1zM4 6h1v2h-1zM5 0h1v6h-1zM6 6h1v2h-1zM7 8h1v1h-1zM8 9h1v1h-1zM9 10h2v1h-2z"/><path id="a4ed8" d="M0 5h1v1h-1zM1 4h2v1h-2zM2 2h1v2h-1zM2 5h1v6h-1zM3 0h1v2h-1zM4 3h7v1h-7zM5 5h1v1h-1zM6 6h1v2h-1zM6 10h3v1h-3zM8 0h1v3h-1zM8 4h1v6h-1z"/><path id="a4ef6" d="M0 5h1v1h-1zM1 4h3v1h-3zM2 2h1v2h-1zM2 5h1v6h-1zM3 0h1v2h-1zM4 3h6v1h-6zM4 6h7v1h-7zM5 1h1v2h-1zM7 0h1v3h-1zM7 4h1v2h-1zM7 7h1v4h-1z"/><path id="a4ef7" d="M0 5h1v1h-1zM1 4h2v1h-2zM2 2h1v1h-1zM2 5h1v5h-1zM2 10h2v1h-2zM2 3h3v1h-3zM3 0h1v2h-1zM4 9h1v1h-1zM5 2h1v1h-1zM5 4h1v5h-1zM6 0h1v1h-1zM6 1h2v1h-2zM8 2h1v1h-1zM8 4h1v7h-1zM9 3h2v1h-2z"/><path id="a4f59" d="M0 4h2v1h-2zM1 10h1v1h-1zM1 6h9v1h-9zM2 3h1v1h-1zM2 9h1v1h-1zM3 2h1v1h-1zM3 8h1v1h-1zM3 4h5v1h-5zM4 1h1v1h-1zM4 10h2v1h-2zM5 0h1v1h-1zM5 5h1v1h-1zM5 7h1v3h-1zM6 1h1v1h-1zM7 2h1v1h-1zM7 8h1v1h-1zM8 3h1v1h-1zM8 9h1v1h-1zM9 10h1v1h-1zM9 4h2v1h-2z"/><path id="a4f5c" d="M0 5h1v1h-1zM1 4h3v1h-3zM2 2h1v2h-1zM2 5h1v6h-1zM3 0h1v2h-1zM4 3h1v1h-1zM5 0h1v2h-1zM5 2h6v1h-6zM6 3h1v2h-1zM6 6h1v2h-1zM6 9h1v2h-1zM6 5h4v1h-4zM6 8h5v1h-5z"/><path id="a503c" d="M0 5h1v1h-1zM1 4h2v1h-2zM2 2h1v2h-1zM2 5h1v6h-1zM3 0h1v1h-1zM3 1h8v1h-8zM4 10h7v1h-7zM5 4h1v1h-1zM5 6h1v1h-1zM5 8h1v2h-1zM5 7h3v1h-3zM5 3h5v1h-5zM5 5h5v1h-5zM6 2h1v1h-1zM7 0h1v1h-1zM7 8h3v1h-3zM9 4h1v1h-1zM9 6h1v2h-1zM9 9h1v1h-1z"/><path id="a5168" d="M0 4h2v1h-2zM1 10h9v1h-9zM2 3h1v1h-1zM3 2h1v1h-1zM3 4h5v1h-5zM3 7h5v1h-5zM4 1h1v1h-1zM5 0h1v1h-1zM5 5h1v2h-1zM5 8h1v2h-1zM6 1h1v1h-1zM7 2h1v1h-1zM8 3h1v1h-1zM9 4h2v1h-2z"/><path id="a5171" d="M0 6h11v1h-11zM1 10h1v1h-1zM1 2h9v1h-9zM2 9h1v1h-1zM3 0h1v2h-1zM3 3h1v3h-1zM3 8h1v1h-1zM7 0h1v2h-1zM7 3h1v3h-1zM7 8h1v1h-1zM8 9h1v1h-1zM9 10h1v1h-1z"/><path id="a51fa" d="M0 6h1v4h-1zM0 10h11v1h-11zM1 1h1v3h-1zM1 4h9v1h-9zM5 0h1v4h-1zM5 5h1v5h-1zM9 1h1v3h-1zM10 6h1v4h-1z"/><path id="a51fb" d="M0 5h11v1h-11zM1 7h1v3h-1zM1 2h9v1h-9zM1 10h9v1h-9zM5 0h1v2h-1zM5 3h1v2h-1zM5 6h1v4h-1zM9 7h1v3h-1z"/><path id="a5217" d="M0 6h1v1h-1zM0 10h2v1h-2zM1 5h2v1h-2zM1 0h6v1h-6zM2 4h1v1h-1zM2 9h1v1h-1zM2 3h4v1h-4zM3 1h1v2h-1zM3 8h1v1h-1zM3 6h2v1h-2zM4 7h1v1h-1zM5 4h1v2h-1zM7 2h1v6h-1zM8 10h3v1h-3zM10 0h1v10h-1z"/><path id="a5236" d="M0 3h1v1h-1zM0 4h7v1h-7zM1 1h1v1h-1zM1 7h1v3h-1zM1 2h6v1h-6zM1 6h6v1h-6zM3 0h1v2h-1zM3 3h1v1h-1zM3 5h1v1h-1zM3 7h1v4h-1zM5 9h2v1h-2zM6 7h1v2h-1zM8 1h1v7h-1zM8 10h3v1h-3zM10 0h1v10h-1z"/><path id="a5237" d="M0 7h1v2h-1zM1 1h1v1h-1zM1 3h1v2h-1zM1 6h2v1h-2zM1 0h6v1h-6zM1 2h6v1h-6zM1 5h6v1h-6zM2 7h1v3h-1zM4 3h1v2h-1zM4 6h1v3h-1zM4 10h1v1h-1zM4 9h3v1h-3zM6 1h1v1h-1zM6 6h1v3h-1zM8 2h1v7h-1zM8 10h3v1h-3zM10 0h1v10h-1z"/><path id="a5269" d="M0 10h1v1h-1zM0 5h2v1h-2zM0 7h2v1h-2zM0 3h7v1h-7zM1 4h1v1h-1zM1 6h1v1h-1zM1 9h1v1h-1zM1 1h4v1h-4zM2 8h3v1h-3zM3 2h1v1h-1zM3 4h1v4h-1zM3 9h1v2h-1zM5 4h1v1h-1zM5 6h1v1h-1zM5 9h1v1h-1zM5 0h2v1h-2zM5 5h2v1h-2zM5 7h2v1h-2zM6 10h1v1h-1zM8 2h1v6h-1zM8 10h3v1h-3zM10 0h1v10h-1z"/><path id="a529f" d="M0 8h2v1h-2zM0 2h5v1h-5zM2 3h1v4h-1zM2 7h3v1h-3zM3 10h2v1h-2zM5 9h1v1h-1zM5 3h6v1h-6zM6 7h1v2h-1zM7 0h1v3h-1zM7 4h1v3h-1zM8 10h2v1h-2zM10 4h1v6h-1z"/><path id="a533a" d="M1 1h1v9h-1zM1 0h9v1h-9zM1 10h10v1h-10zM3 2h1v1h-1zM3 8h1v1h-1zM4 3h1v1h-1zM4 7h1v1h-1zM5 4h1v1h-1zM5 6h1v1h-1zM6 5h1v1h-1zM7 4h1v1h-1zM7 6h1v1h-1zM8 2h1v2h-1zM8 7h1v2h-1z"/><path id="a53c2" d="M0 6h2v1h-2zM0 4h11v1h-11zM2 5h1v1h-1zM2 10h4v1h-4zM2 2h7v1h-7zM3 1h1v1h-1zM3 6h2v1h-2zM3 8h2v1h-2zM4 0h1v1h-1zM4 3h1v1h-1zM5 5h1v1h-1zM5 7h2v1h-2zM6 9h2v1h-2zM7 1h1v1h-1zM8 5h1v1h-1zM8 8h1v1h-1zM9 6h2v1h-2z"/><path id="a53f7" d="M0 4h11v1h-11zM2 1h1v1h-1zM2 0h7v1h-7zM2 2h7v1h-7zM3 6h6v1h-6zM4 5h1v1h-1zM5 9h1v1h-1zM6 10h2v1h-2zM8 1h1v1h-1zM8 7h1v3h-1z"/><path id="a5408" d="M0 4h2v1h-2zM2 3h1v1h-1zM2 7h1v2h-1zM2 10h1v1h-1zM2 6h7v1h-7zM2 9h7v1h-7zM3 2h1v1h-1zM3 4h5v1h-5zM4 1h1v1h-1zM5 0h1v1h-1zM6 1h1v1h-1zM7 2h1v1h-1zM8 3h1v1h-1zM8 7h1v2h-1zM8 10h1v1h-1zM9 4h2v1h-2z"/><path id="a540d" d="M0 7h4v1h-4zM1 4h1v1h-1zM2 3h1v1h-1zM3 0h1v1h-1zM3 2h1v1h-1zM3 8h1v2h-1zM3 1h7v1h-7zM3 6h7v1h-7zM3 10h7v1h-7zM4 3h1v1h-1zM5 5h1v1h-1zM5 4h2v1h-2zM7 3h1v1h-1zM8 2h1v1h-1zM9 7h1v3h-1z"/><path id="a552e" d="M0 4h1v1h-1zM1 3h9v1h-9zM2 0h1v1h-1zM2 2h1v1h-1zM2 4h1v1h-1zM2 6h1v1h-1zM2 8h1v2h-1zM2 5h8v1h-8zM2 10h8v1h-8zM2 1h9v1h-9zM2 7h9v1h-9zM6 0h1v1h-1zM6 2h1v1h-1zM6 4h1v1h-1zM6 6h1v1h-1zM9 8h1v2h-1z"/><path id="a5546" d="M0 1h11v1h-11zM1 4h1v2h-1zM1 7h1v4h-1zM1 3h9v1h-9zM1 6h9v1h-9zM3 2h1v1h-1zM3 5h1v1h-1zM3 7h1v1h-1zM3 9h1v1h-1zM3 8h5v1h-5zM4 4h1v1h-1zM5 0h1v1h-1zM6 4h1v1h-1zM7 2h1v1h-1zM7 5h1v1h-1zM7 7h1v1h-1zM7 9h1v1h-1zM8 10h2v1h-2zM9 4h1v2h-1zM9 7h1v3h-1z"/><path id="a590d" d="M0 3h1v1h-1zM0 8h2v1h-2zM0 10h5v1h-5zM1 2h2v1h-2zM2 0h1v1h-1zM2 4h1v1h-1zM2 3h7v1h-7zM2 5h7v1h-7zM2 7h7v1h-7zM2 1h9v1h-9zM3 6h1v1h-1zM4 8h1v1h-1zM5 9h2v1h-2zM7 8h1v1h-1zM7 10h4v1h-4zM8 2h1v1h-1zM8 4h1v1h-1z"/><path id="a59cb" d="M0 10h1v1h-1zM0 2h5v1h-5zM1 5h1v2h-1zM1 9h1v1h-1zM2 0h1v2h-1zM2 3h1v2h-1zM2 8h1v1h-1zM2 7h2v1h-2zM3 6h1v1h-1zM4 3h1v1h-1zM4 5h1v1h-1zM4 8h1v2h-1zM4 4h7v1h-7zM6 2h1v2h-1zM6 7h1v2h-1zM6 10h1v1h-1zM6 6h5v1h-5zM6 9h5v1h-5zM7 0h1v2h-1zM9 2h1v1h-1zM10 3h1v1h-1zM10 7h1v2h-1zM10 10h1v1h-1z"/><path id="a5b57" d="M0 3h1v1h-1zM0 6h11v1h-11zM1 2h1v1h-1zM1 1h10v1h-10zM3 10h3v1h-3zM3 3h5v1h-5zM5 0h1v1h-1zM5 5h1v1h-1zM5 7h1v3h-1zM6 4h1v1h-1zM9 3h1v1h-1zM10 2h1v1h-1z"/><path id="a5bfc" d="M0 6h11v1h-11zM2 1h1v1h-1zM2 3h1v1h-1zM2 0h7v1h-7zM2 2h7v1h-7zM3 7h1v1h-1zM3 4h8v1h-8zM4 8h1v2h-1zM6 10h2v1h-2zM7 5h1v1h-1zM7 7h1v3h-1zM8 1h1v1h-1zM10 2h1v2h-1z"/><path id="a5df2" d="M1 4h1v1h-1zM1 6h1v4h-1zM1 1h8v1h-8zM1 5h8v1h-8zM2 10h9v1h-9zM8 2h1v3h-1zM10 7h1v3h-1z"/><path id="a5e76" d="M0 6h11v1h-11zM1 10h1v1h-1zM1 2h9v1h-9zM2 0h1v1h-1zM2 9h1v1h-1zM3 1h1v1h-1zM3 3h1v3h-1zM3 7h1v2h-1zM7 1h1v1h-1zM7 3h1v3h-1zM7 7h1v4h-1zM8 0h1v1h-1z"/><path id="a5f00" d="M0 10h1v1h-1zM0 5h11v1h-11zM1 9h1v1h-1zM1 0h9v1h-9zM2 7h1v2h-1zM3 1h1v4h-1zM3 6h1v1h-1zM7 1h1v4h-1zM7 6h1v5h-1z"/><path id="a5f0f" d="M0 10h3v1h-3zM0 3h11v1h-11zM1 5h4v1h-4zM3 6h1v3h-1zM3 9h2v1h-2zM6 0h1v3h-1zM6 4h1v3h-1zM7 7h1v2h-1zM8 0h1v1h-1zM8 9h1v1h-1zM9 1h1v1h-1zM9 10h2v1h-2zM10 8h1v2h-1z"/><path id="a5f3a" d="M0 4h1v2h-1zM0 10h2v1h-2zM0 0h3v1h-3zM0 3h3v1h-3zM0 6h3v1h-3zM2 1h1v2h-1zM2 7h1v3h-1zM4 5h1v2h-1zM4 10h4v1h-4zM4 7h6v1h-6zM4 4h7v1h-7zM5 1h1v1h-1zM5 0h5v1h-5zM5 2h5v1h-5zM7 3h1v1h-1zM7 5h1v2h-1zM7 8h1v1h-1zM7 9h4v1h-4zM9 1h1v1h-1zM10 5h1v2h-1zM10 8h1v1h-1zM10 10h1v1h-1z"/><path id="a5f55" d="M0 9h2v1h-2zM0 4h11v1h-11zM2 5h1v1h-1zM2 8h2v1h-2zM2 0h7v1h-7zM2 2h7v1h-7zM3 6h1v1h-1zM4 7h2v1h-2zM4 10h2v1h-2zM5 5h1v1h-1zM5 8h1v2h-1zM5 6h2v1h-2zM7 7h1v1h-1zM8 1h1v1h-1zM8 3h1v1h-1zM8 6h1v1h-1zM8 8h1v1h-1zM9 5h1v1h-1zM9 9h2v1h-2z"/><path id="a5fc3" d="M0 8h1v1h-1zM1 5h1v3h-1zM3 2h1v8h-1zM4 10h5v1h-5zM5 0h1v1h-1zM6 1h1v3h-1zM8 7h1v3h-1zM9 4h1v1h-1zM10 5h1v3h-1z"/><path id="a603b" d="M0 10h1v1h-1zM1 8h1v2h-1zM2 3h1v2h-1zM2 6h1v1h-1zM2 2h7v1h-7zM2 5h7v1h-7zM3 0h1v1h-1zM3 8h1v2h-1zM4 1h1v1h-1zM4 10h5v1h-5zM5 7h1v1h-1zM6 1h1v1h-1zM6 8h1v1h-1zM7 0h1v1h-1zM8 3h1v2h-1zM8 6h1v1h-1zM8 8h1v2h-1zM9 7h1v1h-1zM10 8h1v2h-1z"/><path id="a6062" d="M0 2h1v4h-1zM2 0h1v2h-1zM2 3h1v4h-1zM2 8h1v3h-1zM2 2h2v1h-2zM2 7h2v1h-2zM4 3h1v1h-1zM4 6h1v1h-1zM4 1h7v1h-7zM5 4h1v2h-1zM5 10h1v1h-1zM6 0h1v1h-1zM6 2h1v2h-1zM6 6h1v1h-1zM6 9h1v1h-1zM7 8h1v1h-1zM7 5h2v1h-2zM8 3h1v2h-1zM8 7h1v1h-1zM8 6h2v1h-2zM9 8h1v2h-1zM10 5h1v1h-1zM10 10h1v1h-1z"/><path id="a60a8" d="M0 10h1v1h-1zM0 3h2v1h-2zM1 2h1v1h-1zM1 4h1v3h-1zM1 8h1v2h-1zM2 0h1v2h-1zM3 3h1v1h-1zM3 7h1v3h-1zM4 2h1v1h-1zM4 5h1v1h-1zM4 10h5v1h-5zM5 0h1v1h-1zM5 3h1v2h-1zM5 7h1v1h-1zM5 1h6v1h-6zM6 8h1v1h-1zM6 6h2v1h-2zM7 2h1v4h-1zM8 8h1v2h-1zM9 3h1v1h-1zM9 7h1v1h-1zM10 2h1v1h-1zM10 4h1v2h-1zM10 8h1v2h-1z"/><path id="a6237" d="M0 10h1v1h-1zM1 9h1v1h-1zM2 3h1v2h-1zM2 6h1v3h-1zM2 2h8v1h-8zM2 5h8v1h-8zM5 0h1v1h-1zM6 1h1v1h-1zM9 3h1v2h-1z"/><path id="a6279" d="M0 7h1v1h-1zM0 10h3v1h-3zM0 2h6v1h-6zM1 6h2v1h-2zM2 0h1v2h-1zM2 3h1v2h-1zM2 7h1v3h-1zM2 5h2v1h-2zM4 4h6v1h-6zM5 0h1v2h-1zM5 3h1v1h-1zM5 5h1v4h-1zM5 10h1v1h-1zM5 9h2v1h-2zM7 8h2v1h-2zM8 0h1v4h-1zM8 5h1v3h-1zM8 9h1v1h-1zM9 10h2v1h-2zM10 3h1v1h-1zM10 8h1v2h-1z"/><path id="a6284" d="M0 7h1v1h-1zM0 10h3v1h-3zM0 2h5v1h-5zM1 6h2v1h-2zM2 0h1v2h-1zM2 3h1v2h-1zM2 7h1v3h-1zM2 5h2v1h-2zM4 4h1v1h-1zM4 10h2v1h-2zM5 3h1v1h-1zM6 9h1v1h-1zM6 2h2v1h-2zM7 0h1v2h-1zM7 3h1v4h-1zM7 8h1v1h-1zM8 7h1v1h-1zM9 2h1v1h-1zM9 6h1v1h-1zM10 3h1v1h-1zM10 5h1v1h-1z"/><path id="a62a5" d="M0 7h1v1h-1zM0 10h3v1h-3zM0 2h6v1h-6zM1 6h2v1h-2zM2 0h1v2h-1zM2 3h1v2h-1zM2 7h1v3h-1zM2 5h2v1h-2zM4 4h2v1h-2zM5 1h1v1h-1zM5 3h1v1h-1zM5 6h1v4h-1zM5 10h2v1h-2zM5 0h5v1h-5zM5 5h6v1h-6zM7 6h1v2h-1zM7 9h1v1h-1zM7 3h2v1h-2zM8 8h1v1h-1zM9 1h1v2h-1zM9 6h1v2h-1zM9 9h1v1h-1zM10 10h1v1h-1z"/><path id="a62c9" d="M0 7h1v1h-1zM0 10h3v1h-3zM0 2h11v1h-11zM1 6h2v1h-2zM2 0h1v2h-1zM2 3h1v2h-1zM2 7h1v3h-1zM2 5h2v1h-2zM4 10h7v1h-7zM5 5h1v1h-1zM6 0h1v1h-1zM6 6h1v2h-1zM7 1h1v1h-1zM7 9h1v1h-1zM8 7h1v2h-1zM9 4h1v3h-1z"/><path id="a62e9" d="M0 7h1v1h-1zM0 10h3v1h-3zM0 2h5v1h-5zM1 6h2v1h-2zM2 0h1v2h-1zM2 3h1v2h-1zM2 7h1v3h-1zM2 5h2v1h-2zM4 4h2v1h-2zM4 0h7v1h-7zM4 8h7v1h-7zM5 6h5v1h-5zM6 1h1v1h-1zM6 3h1v1h-1zM7 5h1v1h-1zM7 7h1v1h-1zM7 9h1v2h-1zM7 2h2v1h-2zM9 1h1v1h-1zM9 3h1v1h-1zM10 4h1v1h-1z"/><path id="a63a7" d="M0 7h1v1h-1zM0 10h3v1h-3zM0 2h5v1h-5zM1 6h2v1h-2zM2 0h1v2h-1zM2 3h1v2h-1zM2 7h1v3h-1zM2 5h3v1h-3zM4 1h7v1h-7zM4 10h7v1h-7zM5 4h1v1h-1zM5 6h5v1h-5zM6 3h1v1h-1zM7 0h1v1h-1zM7 7h1v3h-1zM8 3h1v1h-1zM9 4h1v1h-1zM10 2h1v1h-1zM10 5h1v1h-1z"/><path id="a64cd" d="M0 6h3v1h-3zM0 2h4v1h-4zM1 10h2v1h-2zM2 0h1v2h-1zM2 3h1v2h-1zM2 8h1v2h-1zM2 5h5v1h-5zM2 7h9v1h-9zM4 4h1v1h-1zM4 10h1v1h-1zM4 3h3v1h-3zM5 1h1v1h-1zM5 9h1v1h-1zM5 0h5v1h-5zM5 2h5v1h-5zM6 4h1v1h-1zM6 8h3v1h-3zM7 6h1v1h-1zM7 9h1v2h-1zM8 4h1v1h-1zM8 3h3v1h-3zM8 5h3v1h-3zM9 1h1v1h-1zM9 9h1v1h-1zM10 4h1v1h-1zM10 10h1v1h-1z"/><path id="a6570" d="M0 0h1v1h-1zM0 5h1v1h-1zM0 10h3v1h-3zM0 2h6v1h-6zM0 6h6v1h-6zM1 1h1v1h-1zM1 4h1v1h-1zM1 8h2v1h-2zM2 7h1v1h-1zM2 3h2v1h-2zM3 0h1v1h-1zM3 5h1v1h-1zM3 9h1v1h-1zM3 1h2v1h-2zM3 4h2v1h-2zM4 7h1v2h-1zM4 10h3v1h-3zM5 0h1v1h-1zM5 5h1v1h-1zM6 3h2v1h-2zM7 0h1v2h-1zM7 4h1v4h-1zM7 9h1v1h-1zM7 2h4v1h-4zM8 8h1v1h-1zM9 3h1v5h-1zM9 9h1v1h-1zM10 10h1v1h-1z"/><path id="a65b0" d="M0 9h1v1h-1zM0 1h6v1h-6zM0 4h6v1h-6zM0 6h6v1h-6zM1 2h1v1h-1zM1 8h1v1h-1zM2 3h1v1h-1zM2 10h2v1h-2zM3 0h1v1h-1zM3 5h1v1h-1zM3 7h1v3h-1zM4 3h1v1h-1zM5 2h1v1h-1zM5 8h1v1h-1zM5 10h1v1h-1zM6 9h1v1h-1zM7 2h1v2h-1zM7 5h1v4h-1zM7 1h2v1h-2zM7 4h4v1h-4zM9 5h1v6h-1zM9 0h2v1h-2z"/><path id="a672a" d="M0 9h2v1h-2zM0 4h11v1h-11zM1 2h9v1h-9zM2 8h1v1h-1zM3 7h1v1h-1zM4 6h3v1h-3zM5 0h1v2h-1zM5 3h1v1h-1zM5 5h1v1h-1zM5 7h1v4h-1zM7 7h1v1h-1zM8 8h1v1h-1zM9 9h2v1h-2z"/><path id="a6761" d="M0 6h2v1h-2zM0 10h2v1h-2zM1 3h1v1h-1zM2 2h1v1h-1zM2 9h1v1h-1zM2 5h2v1h-2zM2 7h7v1h-7zM3 0h1v1h-1zM3 8h1v1h-1zM3 10h3v1h-3zM3 1h6v1h-6zM4 2h1v1h-1zM4 4h1v1h-1zM5 5h1v2h-1zM5 8h1v2h-1zM5 3h2v1h-2zM6 4h1v1h-1zM7 2h1v1h-1zM7 8h1v1h-1zM7 5h2v1h-2zM8 9h1v1h-1zM9 10h1v1h-1zM9 6h2v1h-2z"/><path id="a67e5" d="M0 1h11v1h-11zM0 4h11v1h-11zM0 10h11v1h-11zM2 3h1v1h-1zM2 5h1v1h-1zM2 7h1v1h-1zM2 6h7v1h-7zM2 8h7v1h-7zM3 2h1v1h-1zM5 0h1v1h-1zM5 2h1v2h-1zM7 2h1v1h-1zM8 3h1v1h-1zM8 5h1v1h-1zM8 7h1v1h-1z"/><path id="a6a21" d="M0 7h1v1h-1zM0 2h4v1h-4zM1 5h2v2h-2zM2 0h1v2h-1zM2 3h1v1h-1zM2 7h1v4h-1zM2 4h2v1h-2zM4 10h2v1h-2zM4 5h6v1h-6zM4 1h7v1h-7zM4 7h7v1h-7zM5 4h1v1h-1zM5 6h1v1h-1zM5 3h5v1h-5zM6 0h1v1h-1zM6 2h1v1h-1zM6 9h1v1h-1zM7 8h1v1h-1zM8 0h1v1h-1zM8 2h1v1h-1zM8 9h1v1h-1zM9 4h1v1h-1zM9 6h1v1h-1zM9 10h2v1h-2z"/><path id="a6b21" d="M0 6h2v1h-2zM1 0h1v1h-1zM1 7h1v3h-1zM2 1h1v2h-1zM2 4h1v2h-1zM3 10h2v1h-2zM4 4h1v1h-1zM5 3h1v1h-1zM5 9h1v1h-1zM5 2h6v1h-6zM6 0h1v2h-1zM6 7h1v2h-1zM7 4h1v3h-1zM8 7h1v2h-1zM9 3h1v1h-1zM9 9h1v1h-1zM10 10h1v1h-1z"/><path id="a6b22" d="M0 3h1v1h-1zM0 9h1v1h-1zM0 1h5v1h-5zM1 4h1v1h-1zM1 8h1v1h-1zM2 5h1v1h-1zM2 7h1v1h-1zM2 6h2v1h-2zM3 4h1v1h-1zM4 2h1v1h-1zM4 7h1v2h-1zM4 10h1v1h-1zM4 3h2v1h-2zM5 9h1v1h-1zM6 0h1v1h-1zM6 2h1v1h-1zM6 7h1v2h-1zM6 1h5v1h-5zM7 3h1v4h-1zM8 7h1v2h-1zM9 3h1v1h-1zM9 9h1v1h-1zM10 2h1v1h-1zM10 10h1v1h-1z"/><path id="a6bcf" d="M0 3h1v1h-1zM0 5h11v1h-11zM1 2h1v1h-1zM1 8h10v1h-10zM2 0h1v1h-1zM2 6h1v2h-1zM2 1h9v1h-9zM3 4h1v1h-1zM3 3h6v1h-6zM5 4h1v1h-1zM5 6h1v1h-1zM6 7h1v1h-1zM6 10h2v1h-2zM8 4h1v1h-1zM8 6h1v2h-1zM8 9h1v1h-1z"/><path id="a6c34" d="M0 9h1v1h-1zM0 3h4v1h-4zM1 8h1v1h-1zM2 6h1v2h-1zM3 4h1v2h-1zM3 9h1v1h-1zM4 10h1v1h-1zM5 0h1v3h-1zM5 4h1v6h-1zM5 3h2v1h-2zM7 4h1v2h-1zM8 3h1v1h-1zM8 6h1v2h-1zM9 2h1v1h-1zM9 8h1v1h-1zM10 9h1v1h-1z"/><path id="a6ee4" d="M0 3h1v1h-1zM0 7h2v1h-2zM1 0h1v1h-1zM1 4h1v1h-1zM1 8h1v2h-1zM1 10h2v1h-2zM2 1h1v1h-1zM2 5h1v2h-1zM3 9h1v1h-1zM4 3h1v1h-1zM4 5h1v4h-1zM4 10h1v1h-1zM4 4h6v1h-6zM4 2h7v1h-7zM5 9h2v1h-2zM6 8h1v1h-1zM6 7h2v1h-2zM7 1h1v1h-1zM7 3h1v1h-1zM7 5h1v1h-1zM7 10h3v1h-3zM7 0h4v1h-4zM7 6h4v1h-4zM8 8h1v1h-1zM9 7h1v1h-1zM9 9h1v1h-1zM10 3h1v1h-1zM10 5h1v1h-1zM10 8h1v1h-1z"/><path id="a70b9" d="M0 10h1v1h-1zM1 9h1v1h-1zM2 5h1v2h-1zM2 4h7v1h-7zM2 7h7v1h-7zM3 9h1v1h-1zM4 10h1v1h-1zM5 0h1v2h-1zM5 3h1v1h-1zM5 2h5v1h-5zM6 9h1v1h-1zM7 10h1v1h-1zM8 5h1v2h-1zM9 9h1v1h-1zM10 10h1v1h-1z"/><path id="a7387" d="M0 2h1v1h-1zM0 6h2v1h-2zM0 1h11v1h-11zM0 8h11v1h-11zM1 3h1v1h-1zM2 5h1v1h-1zM3 3h1v1h-1zM3 6h5v1h-5zM4 2h1v1h-1zM4 5h1v1h-1zM4 4h2v1h-2zM5 0h1v1h-1zM5 7h1v1h-1zM5 9h1v2h-1zM6 3h1v1h-1zM6 5h1v1h-1zM8 3h1v1h-1zM8 5h1v1h-1zM9 2h1v1h-1zM9 6h1v1h-1z"/><path id="a7406" d="M0 9h2v1h-2zM0 1h5v1h-5zM0 5h11v1h-11zM2 2h1v3h-1zM2 6h1v2h-1zM2 8h2v1h-2zM4 3h1v2h-1zM4 0h7v1h-7zM4 2h7v1h-7zM4 10h7v1h-7zM5 7h5v1h-5zM7 1h1v1h-1zM7 3h1v2h-1zM7 6h1v1h-1zM7 8h1v2h-1zM10 1h1v1h-1zM10 3h1v2h-1z"/><path id="a7528" d="M0 9h1v2h-1zM1 1h1v2h-1zM1 4h1v2h-1zM1 7h1v2h-1zM1 0h9v1h-9zM1 3h9v1h-9zM1 6h9v1h-9zM5 1h1v2h-1zM5 4h1v2h-1zM5 7h1v4h-1zM8 10h2v1h-2zM9 1h1v2h-1zM9 4h1v2h-1zM9 7h1v3h-1z"/><path id="a7535" d="M1 3h1v1h-1zM1 5h1v2h-1zM1 2h9v1h-9zM1 4h9v1h-9zM1 7h9v1h-9zM5 0h1v2h-1zM5 3h1v1h-1zM5 5h1v2h-1zM5 8h1v2h-1zM6 10h5v1h-5zM9 3h1v1h-1zM9 5h1v2h-1zM10 8h1v2h-1z"/><path id="a76d1" d="M0 10h11v1h-11zM1 1h1v5h-1zM1 8h1v2h-1zM1 7h9v1h-9zM4 0h1v4h-1zM4 5h1v2h-1zM4 8h1v2h-1zM4 4h2v1h-2zM6 0h1v2h-1zM6 3h1v1h-1zM6 8h1v2h-1zM6 2h5v1h-5zM8 4h1v1h-1zM9 5h1v1h-1zM9 8h1v2h-1z"/><path id="a7b2c" d="M0 3h1v1h-1zM0 10h2v1h-2zM1 0h1v1h-1zM1 2h1v1h-1zM1 6h1v1h-1zM1 1h4v1h-4zM1 5h9v1h-9zM1 7h10v1h-10zM2 9h1v1h-1zM2 3h8v1h-8zM3 2h1v1h-1zM3 8h1v1h-1zM5 2h1v1h-1zM5 4h1v1h-1zM5 6h1v1h-1zM5 8h1v3h-1zM6 0h1v1h-1zM6 1h5v1h-5zM8 2h1v1h-1zM8 9h2v1h-2zM9 4h1v1h-1zM10 8h1v1h-1z"/><path id="a7ba1" d="M0 4h1v1h-1zM0 3h11v1h-11zM1 2h1v1h-1zM2 0h1v1h-1zM2 6h1v1h-1zM2 8h1v2h-1zM2 1h4v1h-4zM2 5h7v1h-7zM2 7h8v1h-8zM2 10h8v1h-8zM3 2h1v1h-1zM6 2h1v1h-1zM7 0h1v1h-1zM7 1h4v1h-4zM8 2h1v1h-1zM8 6h1v1h-1zM9 8h1v2h-1zM10 4h1v1h-1z"/><path id="a7cfb" d="M1 10h1v1h-1zM1 1h6v1h-6zM1 6h9v1h-9zM2 9h1v1h-1zM2 3h6v1h-6zM3 8h1v1h-1zM4 2h1v1h-1zM4 5h1v1h-1zM4 10h2v1h-2zM5 4h1v1h-1zM5 7h1v3h-1zM7 8h1v1h-1zM7 0h3v1h-3zM8 2h1v1h-1zM8 5h1v1h-1zM8 9h1v1h-1zM9 7h1v1h-1zM9 10h1v1h-1z"/><path id="a7edf" d="M0 10h2v1h-2zM0 4h3v1h-3zM0 7h4v1h-4zM1 2h1v2h-1zM1 6h1v1h-1zM2 0h1v2h-1zM2 5h1v1h-1zM2 9h2v1h-2zM3 3h1v1h-1zM4 10h1v1h-1zM4 1h7v1h-7zM4 4h7v1h-7zM5 3h1v1h-1zM5 9h1v1h-1zM6 2h1v1h-1zM6 5h1v4h-1zM7 0h1v1h-1zM8 5h1v5h-1zM8 10h3v1h-3zM9 3h1v1h-1zM10 5h1v1h-1zM10 8h1v2h-1z"/><path id="a7f16" d="M0 10h2v1h-2zM0 4h3v1h-3zM0 7h11v1h-11zM1 2h1v2h-1zM1 6h1v1h-1zM2 0h1v2h-1zM2 5h1v1h-1zM2 9h3v1h-3zM3 3h8v1h-8zM4 2h1v1h-1zM4 4h1v1h-1zM4 6h1v1h-1zM4 8h1v1h-1zM4 10h1v1h-1zM4 1h7v1h-7zM4 5h7v1h-7zM6 6h1v1h-1zM6 8h1v2h-1zM7 0h1v1h-1zM8 6h1v1h-1zM8 8h1v2h-1zM9 10h2v1h-2zM10 2h1v1h-1zM10 6h1v1h-1zM10 8h1v2h-1z"/><path id="a7f6e" d="M0 4h11v1h-11zM0 10h11v1h-11zM1 1h1v1h-1zM1 0h9v1h-9zM1 2h9v1h-9zM2 5h1v1h-1zM2 7h1v1h-1zM2 9h1v1h-1zM2 6h7v1h-7zM2 8h7v1h-7zM4 1h1v1h-1zM5 3h1v1h-1zM6 1h1v1h-1zM8 5h1v1h-1zM8 7h1v1h-1zM8 9h1v1h-1zM9 1h1v1h-1z"/><path id="a80fd" d="M0 2h6v1h-6zM1 1h1v1h-1zM1 5h1v1h-1zM1 7h1v1h-1zM1 9h1v2h-1zM1 4h5v1h-5zM1 6h5v1h-5zM1 8h5v1h-5zM2 0h1v1h-1zM4 1h1v1h-1zM4 10h2v1h-2zM5 5h1v1h-1zM5 7h1v1h-1zM5 9h1v1h-1zM7 0h1v2h-1zM7 3h1v1h-1zM7 6h1v1h-1zM7 8h1v2h-1zM7 2h2v1h-2zM7 7h2v1h-2zM7 4h4v1h-4zM7 10h4v1h-4zM9 1h1v1h-1zM9 6h1v1h-1zM10 3h1v1h-1zM10 8h1v2h-1z"/><path id="a8868" d="M0 9h2v1h-2zM0 5h11v1h-11zM1 1h9v1h-9zM2 8h2v1h-2zM2 3h7v1h-7zM3 7h1v1h-1zM3 9h1v1h-1zM3 10h2v1h-2zM4 6h1v1h-1zM5 0h1v1h-1zM5 2h1v1h-1zM5 4h1v1h-1zM5 9h1v1h-1zM6 6h1v2h-1zM7 8h1v1h-1zM8 7h1v1h-1zM8 9h1v1h-1zM9 6h1v1h-1zM9 10h2v1h-2z"/><path id="a8b66" d="M0 0h6v1h-6zM0 2h7v1h-7zM0 4h11v1h-11zM1 1h1v1h-1zM1 3h1v1h-1zM1 6h9v1h-9zM2 9h1v1h-1zM2 8h7v1h-7zM2 10h7v1h-7zM3 3h1v1h-1zM4 1h1v1h-1zM5 3h1v1h-1zM7 0h1v1h-1zM7 3h1v1h-1zM7 1h4v1h-4zM8 2h1v1h-1zM8 9h1v1h-1zM9 3h1v1h-1z"/><path id="a8ba1" d="M0 4h3v1h-3zM1 0h1v1h-1zM2 1h1v1h-1zM2 5h1v3h-1zM2 9h1v1h-1zM2 8h2v1h-2zM4 7h1v1h-1zM4 3h7v1h-7zM7 0h1v3h-1zM7 4h1v7h-1z"/><path id="a8bb0" d="M0 4h3v1h-3zM1 0h1v1h-1zM2 1h1v1h-1zM2 5h1v4h-1zM2 10h1v1h-1zM2 9h2v1h-2zM4 8h2v1h-2zM5 6h1v2h-1zM5 9h1v1h-1zM5 1h5v1h-5zM5 5h5v1h-5zM6 10h5v1h-5zM9 2h1v3h-1zM10 8h1v2h-1z"/><path id="a8bbe" d="M0 4h3v1h-3zM1 0h1v1h-1zM2 1h1v1h-1zM2 5h1v3h-1zM2 9h1v1h-1zM2 8h2v1h-2zM3 10h3v1h-3zM4 3h1v1h-1zM4 5h6v1h-6zM5 1h1v2h-1zM5 6h1v1h-1zM5 0h4v1h-4zM6 7h1v1h-1zM6 9h1v1h-1zM7 8h1v1h-1zM8 1h1v2h-1zM8 7h1v1h-1zM8 9h1v1h-1zM8 3h3v1h-3zM9 6h1v1h-1zM9 10h2v1h-2z"/><path id="a8be2" d="M0 3h4v1h-4zM1 0h1v1h-1zM2 1h1v1h-1zM2 4h1v4h-1zM2 9h1v1h-1zM2 8h2v1h-2zM4 2h1v1h-1zM5 0h1v1h-1zM5 4h1v1h-1zM5 6h1v2h-1zM5 3h4v1h-4zM5 5h4v1h-4zM5 8h4v1h-4zM5 1h6v1h-6zM8 4h1v1h-1zM8 6h1v2h-1zM8 10h2v1h-2zM10 2h1v8h-1z"/><path id="a8d2d" d="M0 1h1v6h-1zM0 10h1v1h-1zM0 0h5v1h-5zM1 8h1v2h-1zM2 2h1v6h-1zM3 8h1v1h-1zM4 1h1v2h-1zM4 4h1v3h-1zM4 9h1v2h-1zM4 3h2v1h-2zM5 7h3v1h-3zM6 0h1v2h-1zM6 5h1v2h-1zM6 2h5v1h-5zM7 4h1v1h-1zM8 6h1v1h-1zM8 10h2v1h-2zM9 7h2v1h-2zM10 3h1v4h-1zM10 8h1v2h-1z"/><path id="a8d39" d="M1 4h1v1h-1zM1 10h3v1h-3zM1 1h9v1h-9zM1 3h9v1h-9zM1 5h10v1h-10zM2 6h1v3h-1zM4 0h1v1h-1zM4 2h1v1h-1zM4 4h1v1h-1zM4 9h1v1h-1zM5 7h1v2h-1zM6 9h2v1h-2zM7 0h1v1h-1zM7 2h1v1h-1zM7 4h1v1h-1zM8 6h1v3h-1zM8 10h2v1h-2zM9 2h1v1h-1zM10 6h1v1h-1z"/><path id="a8fc7" d="M0 10h1v1h-1zM0 4h3v1h-3zM1 0h1v1h-1zM1 9h1v1h-1zM2 1h1v2h-1zM2 5h1v4h-1zM3 9h1v1h-1zM4 2h7v1h-7zM4 10h7v1h-7zM5 4h1v1h-1zM6 5h1v1h-1zM7 8h2v1h-2zM8 0h1v2h-1zM8 3h1v5h-1z"/><path id="a8fce" d="M0 10h1v1h-1zM0 4h3v1h-3zM1 0h1v1h-1zM1 9h1v1h-1zM2 1h1v2h-1zM2 5h1v4h-1zM3 9h1v1h-1zM4 2h1v5h-1zM4 1h2v1h-2zM4 7h2v1h-2zM4 10h7v1h-7zM6 0h1v1h-1zM6 6h2v1h-2zM7 2h1v4h-1zM7 7h1v2h-1zM7 1h4v1h-4zM9 7h2v1h-2zM10 2h1v5h-1z"/><path id="a9009" d="M0 10h1v1h-1zM0 4h3v1h-3zM1 0h1v1h-1zM1 9h1v1h-1zM2 1h1v2h-1zM2 5h1v4h-1zM3 9h1v1h-1zM4 3h1v1h-1zM4 8h1v1h-1zM4 4h7v1h-7zM4 10h7v1h-7zM5 0h1v2h-1zM5 7h1v1h-1zM5 2h5v1h-5zM6 5h1v2h-1zM7 0h1v2h-1zM7 3h1v1h-1zM8 5h1v3h-1zM9 8h2v1h-2zM10 6h1v2h-1z"/><path id="a914d" d="M0 4h1v1h-1zM0 6h1v1h-1zM0 8h1v1h-1zM0 10h1v1h-1zM0 5h2v1h-2zM0 0h5v1h-5zM0 3h5v1h-5zM0 7h5v1h-5zM0 9h5v1h-5zM1 1h1v2h-1zM2 4h1v1h-1zM3 1h1v2h-1zM3 5h2v1h-2zM4 4h1v1h-1zM4 6h1v1h-1zM4 8h1v1h-1zM4 10h1v1h-1zM6 5h1v5h-1zM6 0h5v1h-5zM6 4h5v1h-5zM6 10h5v1h-5zM10 1h1v3h-1zM10 8h1v2h-1z"/><path id="a91cf" d="M0 4h11v1h-11zM0 10h11v1h-11zM1 8h9v1h-9zM2 1h1v1h-1zM2 3h1v1h-1zM2 5h1v1h-1zM2 7h1v1h-1zM2 0h7v1h-7zM2 2h7v1h-7zM2 6h7v1h-7zM5 5h1v1h-1zM5 7h1v1h-1zM5 9h1v1h-1zM8 1h1v1h-1zM8 3h1v1h-1zM8 5h1v1h-1zM8 7h1v1h-1z"/><path id="a91d1" d="M0 4h2v1h-2zM0 10h11v1h-11zM1 6h9v1h-9zM2 3h1v1h-1zM2 8h1v1h-1zM3 2h1v1h-1zM3 9h1v1h-1zM3 4h5v1h-5zM4 1h1v1h-1zM5 0h1v1h-1zM5 5h1v1h-1zM5 7h1v3h-1zM6 1h1v1h-1zM7 2h1v1h-1zM7 9h1v1h-1zM8 3h1v1h-1zM8 8h1v1h-1zM9 4h2v1h-2z"/><path id="a94fa" d="M0 3h1v1h-1zM0 4h11v1h-11zM0 6h11v1h-11zM1 0h1v2h-1zM1 2h10v1h-10zM2 5h1v1h-1zM2 7h1v2h-1zM2 10h1v1h-1zM2 9h2v1h-2zM4 8h7v1h-7zM5 5h1v1h-1zM5 7h1v1h-1zM5 9h1v2h-1zM7 1h1v1h-1zM7 3h1v1h-1zM7 5h1v1h-1zM7 7h1v1h-1zM7 9h1v2h-1zM7 0h2v1h-2zM9 1h1v1h-1zM9 10h2v1h-2zM10 5h1v1h-1zM10 7h1v1h-1zM10 9h1v1h-1z"/><path id="a9500" d="M0 3h1v1h-1zM0 4h6v1h-6zM0 6h6v1h-6zM1 0h1v2h-1zM1 2h4v1h-4zM2 5h1v1h-1zM2 7h1v2h-1zM2 10h1v1h-1zM2 9h2v1h-2zM4 8h2v1h-2zM5 1h1v1h-1zM5 9h1v2h-1zM5 3h6v1h-6zM5 5h6v1h-6zM5 7h6v1h-6zM6 2h2v1h-2zM7 0h1v2h-1zM8 10h3v1h-3zM9 2h1v1h-1zM10 1h1v1h-1zM10 4h1v1h-1zM10 6h1v1h-1zM10 8h1v2h-1z"/><path id="a95f8" d="M1 2h1v9h-1zM2 0h1v1h-1zM3 1h1v1h-1zM3 3h1v1h-1zM3 5h1v1h-1zM3 7h1v1h-1zM3 2h6v1h-6zM3 4h6v1h-6zM3 6h6v1h-6zM5 3h1v1h-1zM5 5h1v1h-1zM5 7h1v3h-1zM5 0h6v1h-6zM8 3h1v1h-1zM8 5h1v1h-1zM8 7h1v1h-1zM9 10h2v1h-2zM10 1h1v9h-1z"/><path id="a9608" d="M0 2h1v9h-1zM2 0h1v1h-1zM2 6h1v1h-1zM2 5h3v1h-3zM2 7h3v1h-3zM2 9h3v1h-3zM2 3h9v1h-9zM3 1h1v1h-1zM4 6h1v1h-1zM5 10h1v1h-1zM5 0h6v1h-6zM6 2h1v1h-1zM6 4h1v3h-1zM6 9h1v1h-1zM7 1h1v1h-1zM7 7h1v2h-1zM8 2h1v1h-1zM8 5h1v2h-1zM8 9h1v1h-1zM9 10h2v1h-2zM10 1h1v2h-1zM10 4h1v6h-1z"/><path id="a9875" d="M0 0h11v1h-11zM1 10h2v1h-2zM2 3h1v5h-1zM2 2h7v1h-7zM3 9h1v1h-1zM4 8h1v1h-1zM5 1h1v1h-1zM5 4h1v3h-1zM5 7h2v1h-2zM7 8h1v1h-1zM8 3h1v5h-1zM8 9h2v1h-2zM9 10h1v1h-1z"/><path id="a9884" d="M0 0h5v1h-5zM0 4h5v1h-5zM1 2h2v1h-2zM1 10h2v1h-2zM2 3h1v1h-1zM2 5h1v5h-1zM3 1h1v1h-1zM4 5h1v1h-1zM5 10h2v1h-2zM6 3h1v6h-1zM6 0h5v1h-5zM6 2h5v1h-5zM7 9h1v1h-1zM8 1h1v1h-1zM8 4h1v5h-1zM9 9h1v1h-1zM10 3h1v6h-1zM10 10h1v1h-1z"/><path id="a989d" d="M0 2h1v1h-1zM0 4h2v1h-2zM0 1h6v1h-6zM0 7h7v1h-7zM1 6h1v1h-1zM1 8h1v1h-1zM1 10h1v1h-1zM1 3h4v1h-4zM1 9h4v1h-4zM2 0h1v1h-1zM2 5h2v1h-2zM4 4h1v1h-1zM4 6h1v1h-1zM4 8h1v1h-1zM4 10h3v1h-3zM5 2h6v1h-6zM6 3h1v4h-1zM6 8h1v1h-1zM6 0h5v1h-5zM7 9h1v1h-1zM8 1h1v1h-1zM8 4h1v5h-1zM9 9h1v1h-1zM10 3h1v6h-1zM10 10h1v1h-1z"/><path id="aff08" d="M7 2h1v6h-1zM8 0h1v2h-1zM8 8h1v2h-1zM9 -1h1v1h-1zM9 10h1v1h-1z"/><path id="aff09" d="M3 -1h1v1h-1zM3 10h1v1h-1zM4 0h1v2h-1zM4 8h1v2h-1zM5 2h1v6h-1z"/><path id="aff0c" d="M3 9h1v1h-1zM3 6h2v2h-2zM4 8h1v1h-1z"/><path id="b4ed8" d="M0 5h4v1h-4zM1 4h3v1h-3zM2 2h2v1h-2zM2 6h2v5h-2zM2 3h10v1h-10zM3 0h2v2h-2zM5 5h2v1h-2zM6 6h4v2h-4zM6 10h4v1h-4zM8 0h2v3h-2zM8 4h2v2h-2zM8 8h2v2h-2z"/><path id="b4f5c" d="M0 5h4v1h-4zM1 4h4v1h-4zM2 2h2v1h-2zM2 6h2v5h-2zM2 3h6v1h-6zM3 0h4v2h-4zM5 2h7v1h-7zM6 4h2v1h-2zM6 6h2v2h-2zM6 9h2v2h-2zM6 5h5v1h-5zM6 8h6v1h-6z"/><path id="b5b89" d="M0 3h2v1h-2zM0 5h12v1h-12zM1 2h2v1h-2zM1 10h4v1h-4zM1 1h11v1h-11zM2 7h3v1h-3zM3 6h2v1h-2zM4 3h2v2h-2zM4 9h2v1h-2zM4 8h4v1h-4zM5 0h2v1h-2zM7 6h2v2h-2zM7 9h3v1h-3zM9 3h2v1h-2zM9 10h3v1h-3zM10 2h2v1h-2z"/><path id="b6279" d="M0 7h4v1h-4zM0 10h4v1h-4zM0 2h7v1h-7zM1 6h3v1h-3zM2 0h2v2h-2zM2 3h2v1h-2zM2 8h2v2h-2zM2 5h5v1h-5zM2 4h9v1h-9zM5 0h2v2h-2zM5 3h2v1h-2zM5 6h2v2h-2zM5 10h2v1h-2zM5 8h7v2h-7zM8 0h2v3h-2zM8 5h2v3h-2zM8 3h4v1h-4zM9 10h3v1h-3z"/><path id="b64cd" d="M0 6h4v1h-4zM0 2h11v1h-11zM1 10h5v1h-5zM2 0h2v2h-2zM2 8h2v2h-2zM2 3h10v3h-10zM2 7h10v1h-10zM5 1h2v1h-2zM5 0h6v1h-6zM5 9h6v1h-6zM6 8h4v1h-4zM7 6h2v1h-2zM7 10h2v1h-2zM9 1h2v1h-2zM10 10h2v1h-2z"/><path id="b7406" d="M0 9h3v1h-3zM0 1h6v1h-6zM0 5h12v1h-12zM2 6h2v2h-2zM2 8h3v1h-3zM2 3h4v2h-4zM2 2h10v1h-10zM4 0h8v1h-8zM4 10h8v1h-8zM5 7h6v1h-6zM7 1h2v1h-2zM7 3h2v2h-2zM7 6h2v1h-2zM7 8h2v2h-2zM10 1h2v1h-2zM10 3h2v2h-2z"/><path id="b745e" d="M0 8h3v1h-3zM0 1h6v1h-6zM1 4h11v1h-11zM2 3h2v1h-2zM2 5h2v1h-2zM2 2h10v1h-10zM2 6h10v2h-10zM4 0h2v1h-2zM4 10h2v1h-2zM4 8h8v2h-8zM6 5h2v1h-2zM7 0h2v2h-2zM9 10h3v1h-3zM10 0h2v2h-2z"/><path id="b7535" d="M1 3h2v1h-2zM1 5h2v2h-2zM1 2h10v1h-10zM1 4h10v1h-10zM1 7h10v1h-10zM5 0h2v2h-2zM5 3h2v1h-2zM5 5h2v2h-2zM5 8h2v2h-2zM6 10h6v1h-6zM9 3h2v1h-2zM9 5h2v2h-2zM10 8h2v2h-2z"/><path id="b79d1" d="M0 1h4v1h-4zM0 7h4v1h-4zM0 3h6v1h-6zM1 6h5v1h-5zM2 2h2v1h-2zM2 4h2v1h-2zM2 8h2v3h-2zM2 5h3v1h-3zM3 0h3v1h-3zM5 8h3v1h-3zM6 1h2v1h-2zM6 4h2v1h-2zM7 2h4v1h-4zM7 5h4v1h-4zM7 7h4v1h-4zM9 0h2v2h-2zM9 3h2v2h-2zM9 8h2v3h-2zM9 6h3v1h-3z"/><path id="b7a0b" d="M0 1h4v1h-4zM0 8h4v1h-4zM0 3h11v1h-11zM1 7h3v1h-3zM1 6h5v1h-5zM2 2h2v1h-2zM2 4h2v1h-2zM2 9h2v1h-2zM2 5h9v1h-9zM2 10h10v1h-10zM3 0h8v1h-8zM5 1h2v2h-2zM5 7h6v1h-6zM7 6h2v1h-2zM7 8h2v2h-2zM9 1h2v2h-2z"/><path id="b7ba1" d="M0 4h2v1h-2zM0 3h12v1h-12zM1 2h4v1h-4zM2 0h2v1h-2zM2 6h2v1h-2zM2 8h2v2h-2zM2 5h8v1h-8zM2 7h9v1h-9zM2 10h9v1h-9zM2 1h10v1h-10zM6 2h4v1h-4zM7 0h2v1h-2zM8 6h2v1h-2zM9 8h2v2h-2zM10 4h2v1h-2z"/><path id="b7cfb" d="M1 10h2v1h-2zM1 1h7v1h-7zM1 6h10v1h-10zM2 9h2v1h-2zM2 3h7v1h-7zM3 8h6v1h-6zM4 2h2v1h-2zM4 5h2v1h-2zM4 10h3v1h-3zM5 4h2v1h-2zM5 7h2v1h-2zM5 9h2v1h-2zM7 0h4v1h-4zM8 2h2v1h-2zM8 5h2v1h-2zM8 9h2v1h-2zM9 7h2v1h-2zM9 10h2v1h-2z"/><path id="b7edf" d="M0 10h3v1h-3zM0 7h5v1h-5zM0 4h12v1h-12zM1 2h2v1h-2zM1 6h2v1h-2zM1 3h6v1h-6zM2 0h2v1h-2zM2 5h2v1h-2zM2 9h5v1h-5zM2 1h10v1h-10zM4 10h2v1h-2zM6 2h2v1h-2zM6 6h4v2h-4zM6 5h6v1h-6zM6 8h6v1h-6zM7 0h2v1h-2zM8 9h4v2h-4zM9 3h2v1h-2z"/><path id="b80fd" d="M0 2h10v1h-10zM1 1h2v1h-2zM1 5h2v1h-2zM1 7h2v1h-2zM1 9h2v2h-2zM1 8h8v1h-8zM1 6h10v1h-10zM1 4h11v1h-11zM2 0h2v1h-2zM4 1h2v1h-2zM4 10h8v1h-8zM5 5h2v1h-2zM5 9h4v1h-4zM5 7h5v1h-5zM7 0h2v1h-2zM7 3h2v1h-2zM7 1h4v1h-4zM10 3h2v1h-2zM10 8h2v2h-2z"/><path id="b8868" d="M0 9h7v1h-7zM0 5h12v1h-12zM1 1h10v1h-10zM2 8h3v1h-3zM2 3h8v1h-8zM3 7h2v1h-2zM3 10h3v1h-3zM4 6h4v1h-4zM5 0h2v1h-2zM5 2h2v1h-2zM5 4h2v1h-2zM6 7h4v1h-4zM7 8h2v1h-2zM8 9h2v1h-2zM9 6h2v1h-2zM9 10h3v1h-3z"/><path id="b8d39" d="M1 4h2v1h-2zM1 10h4v1h-4zM1 1h10v1h-10zM1 3h10v1h-10zM1 5h11v1h-11zM2 6h2v3h-2zM4 0h2v1h-2zM4 2h2v1h-2zM4 4h2v1h-2zM4 9h5v1h-5zM5 7h2v2h-2zM7 0h2v1h-2zM7 4h2v1h-2zM7 2h4v1h-4zM8 7h2v2h-2zM8 10h3v1h-3zM8 6h4v1h-4z"/><path id="b8fdc" d="M0 10h2v1h-2zM0 4h4v1h-4zM1 0h2v1h-2zM1 9h4v1h-4zM2 1h2v2h-2zM2 5h2v3h-2zM2 8h4v1h-4zM4 3h8v1h-8zM4 10h8v1h-8zM5 7h2v1h-2zM5 0h6v1h-6zM6 4h4v2h-4zM6 6h6v1h-6zM8 7h4v1h-4zM9 8h3v1h-3z"/><path id="b91cf" d="M0 4h12v1h-12zM0 10h12v1h-12zM1 8h10v1h-10zM2 1h2v1h-2zM2 3h2v1h-2zM2 5h2v1h-2zM2 7h2v1h-2zM2 0h8v1h-8zM2 2h8v1h-8zM2 6h8v1h-8zM5 5h2v1h-2zM5 7h2v1h-2zM5 9h2v1h-2zM8 1h2v1h-2zM8 3h2v1h-2zM8 5h2v1h-2zM8 7h2v1h-2z"/><path id="b9884" d="M0 0h12v1h-12zM0 4h12v1h-12zM1 2h3v1h-3zM1 10h3v1h-3zM2 3h2v1h-2zM2 6h2v4h-2zM2 5h10v1h-10zM3 1h2v1h-2zM5 10h3v1h-3zM6 3h2v1h-2zM6 2h6v1h-6zM6 6h6v3h-6zM7 9h4v1h-4zM8 1h2v1h-2zM10 3h2v1h-2zM10 10h2v1h-2z"/><path id="c53f7" d="M0 5h12v1h-12zM2 1h1v2h-1zM2 0h7v1h-7zM2 3h7v1h-7zM2 7h7v1h-7zM3 6h1v1h-1zM5 10h1v1h-1zM6 11h1v1h-1zM7 10h1v1h-1zM8 1h1v2h-1zM8 8h1v2h-1z"/><path id="c5efa" d="M0 11h1v1h-1zM0 1h3v1h-3zM1 4h1v1h-1zM1 7h1v1h-1zM1 10h1v1h-1zM1 5h3v1h-3zM2 2h1v2h-1zM2 8h1v2h-1zM3 6h1v2h-1zM3 10h1v1h-1zM4 3h8v1h-8zM4 9h8v1h-8zM4 11h8v1h-8zM5 1h6v1h-6zM5 5h6v1h-6zM5 7h6v1h-6zM7 0h1v1h-1zM7 2h1v1h-1zM7 4h1v1h-1zM7 6h1v1h-1zM7 8h1v1h-1zM7 10h1v1h-1zM10 2h1v1h-1zM10 4h1v1h-1z"/><path id="c697c" d="M0 6h1v1h-1zM0 2h5v1h-5zM1 4h2v1h-2zM1 5h3v1h-3zM2 0h1v2h-1zM2 3h1v1h-1zM2 6h1v6h-1zM4 6h1v1h-1zM4 11h3v1h-3zM5 0h1v1h-1zM5 5h1v1h-1zM5 9h2v1h-2zM5 3h7v1h-7zM5 7h7v1h-7zM6 1h1v1h-1zM6 4h1v1h-1zM6 8h1v1h-1zM7 6h1v1h-1zM7 10h2v1h-2zM8 0h1v3h-1zM8 4h1v2h-1zM9 8h1v2h-1zM9 11h3v1h-3zM10 1h1v1h-1zM10 4h1v1h-1zM11 0h1v1h-1zM11 5h1v1h-1z"/><path id="c7b51" d="M0 2h1v2h-1zM0 10h2v1h-2zM0 5h5v1h-5zM1 0h1v1h-1zM1 1h5v1h-5zM2 2h1v1h-1zM2 6h1v3h-1zM2 9h3v1h-3zM3 3h1v1h-1zM3 11h2v1h-2zM5 10h1v1h-1zM6 2h1v2h-1zM6 6h1v1h-1zM6 8h1v2h-1zM6 7h2v1h-2zM6 5h4v1h-4zM7 0h1v1h-1zM7 1h5v1h-5zM8 2h1v1h-1zM8 8h2v1h-2zM9 3h1v1h-1zM9 6h1v2h-1zM9 9h1v2h-1zM9 11h3v1h-3zM11 10h1v1h-1z"/><path id="c7fa4" d="M0 8h1v1h-1zM0 3h12v1h-12zM1 1h5v1h-5zM1 5h5v1h-5zM1 7h5v1h-5zM2 2h1v1h-1zM2 4h1v1h-1zM2 6h1v1h-1zM2 8h1v2h-1zM2 11h1v1h-1zM2 10h4v1h-4zM5 2h1v1h-1zM5 4h1v1h-1zM5 9h1v1h-1zM5 11h1v1h-1zM5 8h7v1h-7zM7 0h1v1h-1zM7 5h5v1h-5zM8 1h1v1h-1zM9 2h1v1h-1zM9 4h1v1h-1zM9 6h1v2h-1zM9 9h1v3h-1zM10 1h1v1h-1zM11 0h1v1h-1z"/><path id="d4ef6" d="M0 5h1v1h-1zM1 4h2v1h-2zM2 2h1v2h-1zM2 6h1v7h-1zM2 5h2v1h-2zM3 0h1v2h-1zM4 4h1v1h-1zM4 7h9v1h-9zM5 1h1v2h-1zM5 3h7v1h-7zM8 0h1v3h-1zM8 4h1v3h-1zM8 8h1v5h-1z"/><path id="d533a" d="M1 2h1v10h-1zM1 1h11v1h-11zM1 12h11v1h-11zM3 3h1v1h-1zM3 10h1v1h-1zM4 4h1v1h-1zM4 9h1v1h-1zM5 5h1v1h-1zM5 8h1v1h-1zM6 6h2v2h-2zM8 5h1v1h-1zM8 8h1v1h-1zM9 3h1v2h-1zM9 9h1v2h-1z"/><path id="d56f4" d="M1 1h1v10h-1zM1 12h1v1h-1zM1 0h11v1h-11zM1 11h11v1h-11zM3 2h7v1h-7zM3 4h7v1h-7zM3 6h7v1h-7zM6 1h1v1h-1zM6 3h1v1h-1zM6 5h1v1h-1zM6 7h1v2h-1zM6 10h1v1h-1zM6 9h3v1h-3zM9 7h1v2h-1zM11 1h1v10h-1zM11 12h1v1h-1z"/><path id="d5df2" d="M1 4h1v2h-1zM1 7h1v5h-1zM1 1h9v1h-9zM1 6h9v1h-9zM2 12h10v1h-10zM9 2h1v4h-1zM9 7h1v1h-1zM11 9h1v3h-1z"/><path id="d6761" d="M0 6h3v1h-3zM1 11h1v1h-1zM2 3h1v1h-1zM2 10h1v1h-1zM2 7h9v1h-9zM3 2h1v1h-1zM3 9h1v1h-1zM3 5h2v1h-2zM4 0h1v1h-1zM4 3h1v1h-1zM4 11h1v1h-1zM4 1h6v1h-6zM5 12h1v1h-1zM5 4h3v1h-3zM6 6h1v1h-1zM6 8h1v4h-1zM8 3h1v1h-1zM8 5h2v1h-2zM9 2h1v1h-1zM9 9h1v1h-1zM10 10h1v1h-1zM10 6h3v1h-3zM11 11h1v1h-1z"/><path id="d8303" d="M0 8h3v1h-3zM0 1h13v1h-13zM1 5h1v1h-1zM2 3h1v1h-1zM2 6h1v1h-1zM2 9h1v4h-1zM3 4h1v1h-1zM3 7h1v1h-1zM4 0h1v1h-1zM4 2h1v1h-1zM4 6h1v1h-1zM6 5h1v7h-1zM6 4h5v1h-5zM7 12h6v1h-6zM8 0h1v1h-1zM8 2h1v1h-1zM8 8h1v1h-1zM9 9h1v1h-1zM10 5h1v4h-1zM12 9h1v3h-1z"/><path id="d9009" d="M0 12h1v1h-1zM0 4h3v1h-3zM1 0h1v1h-1zM1 11h1v1h-1zM2 1h1v2h-1zM2 5h1v6h-1zM3 11h1v1h-1zM4 3h1v1h-1zM4 10h1v1h-1zM4 5h9v1h-9zM4 12h9v1h-9zM5 1h1v1h-1zM5 8h1v2h-1zM5 2h7v1h-7zM6 6h1v2h-1zM8 0h1v2h-1zM8 3h1v2h-1zM9 6h1v4h-1zM10 10h3v1h-3zM12 8h1v2h-1z"/></defs>
<g fill="#606060"><use href="#a6b22" x="35" y="4"/><use href="#a8fce" x="47" y="4"/><use href="#a60a8" x="59" y="4"/><use href="#aff0c" x="71" y="4"/></g>
<g fill="#6e6e63"><use href="#b5b89" x="476" y="2"/><use href="#b79d1" x="488" y="2"/><use href="#b745e" x="500" y="2"/><use href="#b8fdc" x="512" y="2"/><use href="#b7a0b" x="524" y="2"/><use href="#b9884" x="536" y="2"/><use href="#b4ed8" x="548" y="2"/><use href="#b8d39" x="560" y="2"/><use href="#b7535" x="572" y="2"/><use href="#b80fd" x="584" y="2"/><use href="#b7ba1" x="596" y="2"/><use href="#b7406" x="608" y="2"/><use href="#b7cfb" x="620" y="2"/><use href="#b7edf" x="632" y="2"/></g>
<g fill="#5f5f5a"><use href="#a4e2a" x="16" y="30"/><use href="#a4eba" x="28" y="30"/><use href="#a8bbe" x="40" y="30"/><use href="#a7f6e" x="52" y="30"/></g>
<g fill="#5f5f5a"><use href="#a7cfb" x="93" y="30"/><use href="#a7edf" x="105" y="30"/><use href="#a914d" x="117" y="30"/><use href="#a7f6e" x="129" y="30"/></g>
<g fill="#000"><use href="#a7528" x="170" y="30"/><use href="#a6237" x="182" y="30"/><use href="#a7ba1" x="194" y="30"/><use href="#a7406" x="206" y="30"/></g>
<g fill="#5f5f5a"><use href="#a552e" x="247" y="30"/><use href="#a7535" x="259" y="30"/><use href="#a7ba1" x="271" y="30"/><use href="#a7406" x="283" y="30"/></g>
<g fill="#5f5f5a"><use href="#a7535" x="323" y="30"/><use href="#a8868" x="335" y="30"/><use href="#a62a5" x="347" y="30"/><use href="#a8868" x="359" y="30"/><use href="#a4e2d" x="371" y="30"/><use href="#a5fc3" x="383" y="30"/></g>
<g fill="#5f5f5a"><use href="#a552e" x="425" y="30"/><use href="#a6c34" x="437" y="30"/><use href="#a7ba1" x="449" y="30"/><use href="#a7406" x="461" y="30"/></g>
<g fill="#5f5f5a"><use href="#a6c34" x="503" y="30"/><use href="#a8868" x="515" y="30"/><use href="#a62a5" x="527" y="30"/><use href="#a8868" x="539" y="30"/><use href="#a4e2d" x="551" y="30"/><use href="#a5fc3" x="563" y="30"/></g>
<g fill="#000"><use href="#a7535" x="41" y="69"/><use href="#a8868" x="53" y="69"/><use href="#a6279" x="65" y="69"/><use href="#a91cf" x="77" y="69"/><use href="#a64cd" x="89" y="69"/><use href="#a4f5c" x="101" y="69"/></g>
<g fill="#000"><use href="#a6c34" x="161" y="69"/><use href="#a8868" x="173" y="69"/><use href="#a6279" x="185" y="69"/><use href="#a91cf" x="197" y="69"/><use href="#a64cd" x="209" y="69"/><use href="#a4f5c" x="221" y="69"/></g>
<g fill="#000"><use href="#a7535" x="279" y="69"/><use href="#a53c2" x="291" y="69"/><use href="#a91cf" x="303" y="69"/><use href="#a76d1" x="315" y="69"/><use href="#a63a7" x="327" y="69"/></g>
<g fill="#000"><use href="#a7ba1" x="386" y="69"/><use href="#a63a7" x="398" y="69"/><use href="#a8868" x="410" y="69"/><use href="#a7535" x="422" y="69"/><use href="#a53c2" x="434" y="69"/><use href="#a91cf" x="446" y="69"/><use href="#a76d1" x="458" y="69"/><use href="#a63a7" x="470" y="69"/></g>
<g fill="#000"><use href="#a80fd" x="530" y="69"/><use href="#a91cf" x="542" y="69"/><use href="#a8868" x="554" y="69"/><use href="#a76d1" x="566" y="69"/><use href="#a63a7" x="578" y="69"/></g>
<g fill="#000"><use href="#a6279" x="277" y="103"/><use href="#a91cf" x="289" y="103"/><use href="#a8bbe" x="301" y="103"/><use href="#a7f6e" x="313" y="103"/></g>
<g fill="#000"><use href="#a7528" x="643" y="69"/><use href="#a6237" x="655" y="69"/><use href="#a9500" x="667" y="69"/><use href="#a6237" x="679" y="69"/></g>
<g fill="#000"><use href="#a9500" x="737" y="69"/><use href="#a6237" x="749" y="69"/><use href="#a8bb0" x="761" y="69"/><use href="#a5f55" x="773" y="69"/><use href="#a67e5" x="785" y="69"/><use href="#a8be2" x="797" y="69"/></g>
<g fill="#000"><use href="#a7528" x="688" y="103"/><use href="#a6237" x="700" y="103"/><use href="#a9500" x="712" y="103"/><use href="#a6237" x="724" y="103"/></g>
<g fill="#000"><use href="#a7528" x="837" y="93"/><use href="#a6237" x="849" y="93"/><use href="#a5f00" x="861" y="93"/><use href="#a6237" x="873" y="93"/></g>
<g fill="#1b1b1b"><use href="#a6b22" x="29" y="133"/><use href="#a8fce" x="41" y="133"/></g>
<g fill="#000"><use href="#b7535" x="96" y="133"/><use href="#b8868" x="109" y="133"/><use href="#b6279" x="122" y="133"/><use href="#b91cf" x="135" y="133"/><use href="#b64cd" x="148" y="133"/><use href="#b4f5c" x="161" y="133"/></g>
<g fill="#000"><use href="#d5df2" x="30" y="168"/><use href="#d9009" x="44" y="168"/></g>
<g fill="#000"><use href="#d8303" x="30" y="183"/><use href="#d56f4" x="44" y="183"/></g>
<g fill="#000"><use href="#a31" x="72" y="164"/><use href="#a533a" x="78" y="164"/></g>
<g fill="#000"><use href="#a3a" x="93" y="164"/></g>
<g fill="#000"><use href="#a31" x="103" y="164"/></g>
<g fill="#000"><use href="#d5df2" x="30" y="228"/><use href="#d9009" x="44" y="228"/></g>
<g fill="#000"><use href="#d6761" x="30" y="243"/><use href="#d4ef6" x="44" y="243"/></g>
<g fill="#000"><use href="#a70b9" x="49" y="293"/><use href="#a51fb" x="61" y="293"/><use href="#a9009" x="73" y="293"/><use href="#a62e9" x="85" y="293"/><use href="#a8fc7" x="97" y="293"/><use href="#a6ee4" x="109" y="293"/><use href="#a6761" x="121" y="293"/><use href="#a4ef6" x="133" y="293"/></g>
<g fill="#000"><use href="#a5237" x="85" y="326"/><use href="#a65b0" x="97" y="326"/></g>
<g fill="#000"><use href="#c5efa" x="48" y="367"/><use href="#c7b51" x="61" y="367"/><use href="#c7fa4" x="74" y="367"/></g>
<g fill="#000"><use href="#d533a" x="75" y="388"/></g>
<g fill="#000"><use href="#d533a" x="75" y="410"/></g>
<g fill="#000"><use href="#d533a" x="75" y="432"/></g>
<g fill="#000"><use href="#c5efa" x="101" y="433"/><use href="#c7b51" x="114" y="433"/></g>
<g fill="#000"><use href="#c53f7" x="135" y="433"/><use href="#c697c" x="148" y="433"/></g>
<g fill="#000"><use href="#d533a" x="75" y="454"/></g>
<g fill="#000"><use href="#d533a" x="75" y="476"/></g>
<g fill="#000"><use href="#d533a" x="75" y="498"/></g>
<g fill="#000"><use href="#d533a" x="75" y="520"/></g>
<g fill="#000"><use href="#d533a" x="75" y="542"/></g>
<g fill="#000"><use href="#d533a" x="75" y="564"/></g>
<g fill="#000"><use href="#a5217" x="247" y="167"/><use href="#a8868" x="259" y="167"/><use href="#a6a21" x="271" y="167"/><use href="#a5f0f" x="283" y="167"/></g>
<g fill="#9c9a00"><use href="#a4e0a" x="325" y="167"/><use href="#a4e00" x="337" y="167"/><use href="#a9875" x="349" y="167"/></g>
<g fill="#c6bc32"><use href="#a4e0b" x="374" y="167"/><use href="#a4e00" x="386" y="167"/><use href="#a9875" x="398" y="167"/></g>
<g fill="#000"><use href="#a7b2c" x="433" y="167"/></g>
<g fill="#000"><use href="#a9875" x="474" y="167"/></g>
<g fill="#000"><use href="#a5171" x="495" y="167"/></g>
<g fill="#000"><use href="#a9875" x="538" y="167"/></g>
<g fill="#000"><use href="#a6bcf" x="567" y="167"/><use href="#a9875" x="579" y="167"/></g>
<g fill="#000"><use href="#a4e2a" x="621" y="167"/></g>
<g fill="#000"><use href="#a5171" x="649" y="167"/></g>
<g fill="#000"><use href="#a4e2a" x="709" y="167"/></g>
<g fill="#000"><use href="#a5168" x="234" y="200"/><use href="#a9009" x="246" y="200"/></g>
<g fill="#000"><use href="#a7535" x="299" y="196"/><use href="#a4ef7" x="311" y="196"/><use href="#a8bbe" x="323" y="196"/><use href="#a7f6e" x="335" y="196"/></g>
<g fill="#000"><use href="#a91d1" x="373" y="196"/><use href="#a989d" x="385" y="196"/><use href="#a62a5" x="397" y="196"/><use href="#a8b66" x="409" y="196"/><use href="#a8bbe" x="421" y="196"/><use href="#a7f6e" x="433" y="196"/></g>
<g fill="#000"><use href="#a5f3a" x="471" y="191"/><use href="#a5236" x="483" y="191"/><use href="#a5408" x="495" y="191"/><use href="#a95f8" x="507" y="191"/></g>
<g fill="#000"><use href="#aff08" x="459" y="203"/><use href="#a5f3a" x="471" y="203"/><use href="#a5236" x="483" y="203"/><use href="#a6a21" x="495" y="203"/><use href="#a5f0f" x="507" y="203"/><use href="#aff09" x="519" y="203"/></g>
<g fill="#000"><use href="#a5f3a" x="557" y="191"/><use href="#a5236" x="569" y="191"/><use href="#a62c9" x="581" y="191"/><use href="#a95f8" x="593" y="191"/></g>
<g fill="#000"><use href="#aff08" x="545" y="203"/><use href="#a5f3a" x="557" y="203"/><use href="#a5236" x="569" y="203"/><use href="#a6a21" x="581" y="203"/><use href="#a5f0f" x="593" y="203"/><use href="#aff09" x="605" y="203"/></g>
<g fill="#000"><use href="#a6062" x="637" y="196"/><use href="#a590d" x="649" y="196"/><use href="#a9884" x="661" y="196"/><use href="#a4ed8" x="673" y="196"/><use href="#a8d39" x="685" y="196"/></g>
<g fill="#000"><use href="#a529f" x="716" y="190"/><use href="#a7387" x="728" y="190"/><use href="#a9608" x="740" y="190"/><use href="#a503c" x="752" y="190"/><use href="#a8bbe" x="764" y="190"/></g>
<g fill="#000"><use href="#a7f6e" x="740" y="203"/></g>
<g fill="#000"><use href="#a6284" x="815" y="196"/><use href="#a8868" x="827" y="196"/><use href="#a5bfc" x="839" y="196"/><use href="#a51fa" x="851" y="196"/></g>
<g fill="#000"><use href="#a5df2" x="936" y="208"/><use href="#a5f00" x="948" y="208"/><use href="#a6237" x="960" y="208"/></g>
<g fill="#000"><use href="#a62a5" x="987" y="208"/><use href="#a8b66" x="999" y="208"/></g>
<g fill="#000"><use href="#a9009" x="216" y="244"/><use href="#a62e9" x="228" y="244"/></g>
<g fill="#000"><use href="#a8868" x="268" y="244"/><use href="#a53f7" x="280" y="244"/></g>
<g fill="#000"><use href="#a5546" x="337" y="244"/><use href="#a94fa" x="349" y="244"/><use href="#a53f7" x="361" y="244"/></g>
<g fill="#000"><use href="#a7528" x="413" y="237"/><use href="#a6237" x="425" y="237"/></g>
<g fill="#000"><use href="#a7f16" x="413" y="250"/><use href="#a53f7" x="425" y="250"/></g>
<g fill="#000"><use href="#a7528" x="471" y="244"/><use href="#a6237" x="483" y="244"/><use href="#a540d" x="495" y="244"/><use href="#a5b57" x="507" y="244"/></g>
<g fill="#000"><use href="#a8d2d" x="552" y="237"/><use href="#a7535" x="564" y="237"/></g>
<g fill="#000"><use href="#a603b" x="552" y="250"/><use href="#a989d" x="564" y="250"/></g>
<g fill="#000"><use href="#a8d2d" x="612" y="237"/><use href="#a7535" x="624" y="237"/></g>
<g fill="#000"><use href="#a6b21" x="612" y="250"/><use href="#a6570" x="624" y="250"/></g>
<g fill="#000"><use href="#a62a5" x="675" y="237"/><use href="#a8b66" x="687" y="237"/></g>
<g fill="#000"><use href="#a91d1" x="672" y="250"/><use href="#a989d" x="684" y="250"/><use href="#a31" x="696" y="250"/></g>
<g fill="#000"><use href="#a62a5" x="740" y="237"/><use href="#a8b66" x="752" y="237"/></g>
<g fill="#000"><use href="#a91d1" x="737" y="250"/><use href="#a989d" x="749" y="250"/><use href="#a32" x="761" y="250"/></g>
<g fill="#000"><use href="#a529f" x="802" y="237"/><use href="#a7387" x="814" y="237"/></g>
<g fill="#000"><use href="#a9608" x="802" y="250"/><use href="#a503c" x="814" y="250"/></g>
<g fill="#000"><use href="#a5269" x="862" y="237"/><use href="#a4f59" x="874" y="237"/></g>
<g fill="#000"><use href="#a91d1" x="862" y="250"/><use href="#a989d" x="874" y="250"/></g>
<g fill="#000"><use href="#a5408" x="920" y="237"/><use href="#a5e76" x="932" y="237"/><use href="#a8ba1" x="944" y="237"/><use href="#a91cf" x="956" y="237"/></g>
<g fill="#000"><use href="#a4f59" x="932" y="250"/><use href="#a989d" x="944" y="250"/></g>
<svg x="995" y="233" width="11" height="30" viewBox="995 233 11 30" overflow="hidden"><g fill="#000"><use href="#a8d2d" x="1003" y="237"/></g></svg>
<svg x="995" y="233" width="11" height="30" viewBox="995 233 11 30" overflow="hidden"><g fill="#000"><use href="#a91d1" x="1003" y="250"/></g></svg>
<g fill="#fff"><use href="#a672a" x="486" y="267"/><use href="#a5f00" x="498" y="267"/><use href="#a6237" x="510" y="267"/></g>
<g fill="#000"><use href="#a672a" x="486" y="287"/><use href="#a5f00" x="498" y="287"/><use href="#a6237" x="510" y="287"/></g>
<g fill="#000"><use href="#a672a" x="486" y="307"/><use href="#a5f00" x="498" y="307"/><use href="#a6237" x="510" y="307"/></g>
<g fill="#000"><use href="#a672a" x="486" y="327"/><use href="#a5f00" x="498" y="327"/><use href="#a6237" x="510" y="327"/></g>
<g fill="#000"><use href="#a672a" x="486" y="347"/><use href="#a5f00" x="498" y="347"/><use href="#a6237" x="510" y="347"/></g>
<g fill="#000"><use href="#a672a" x="486" y="367"/><use href="#a5f00" x="498" y="367"/><use href="#a6237" x="510" y="367"/></g>
<g fill="#000"><use href="#a672a" x="486" y="387"/><use href="#a5f00" x="498" y="387"/><use href="#a6237" x="510" y="387"/></g>
<g fill="#000"><use href="#a672a" x="486" y="407"/><use href="#a5f00" x="498" y="407"/><use href="#a6237" x="510" y="407"/></g>
<g fill="#000"><use href="#a672a" x="486" y="427"/><use href="#a5f00" x="498" y="427"/><use href="#a6237" x="510" y="427"/></g>
<g fill="#000"><use href="#a672a" x="486" y="447"/><use href="#a5f00" x="498" y="447"/><use href="#a6237" x="510" y="447"/></g>
<g fill="#000"><use href="#a672a" x="486" y="467"/><use href="#a5f00" x="498" y="467"/><use href="#a6237" x="510" y="467"/></g>
<g fill="#000"><use href="#a672a" x="486" y="487"/><use href="#a5f00" x="498" y="487"/><use href="#a6237" x="510" y="487"/></g>
<g fill="#000"><use href="#a672a" x="486" y="507"/><use href="#a5f00" x="498" y="507"/><use href="#a6237" x="510" y="507"/></g>
<g fill="#000"><use href="#a672a" x="486" y="527"/><use href="#a5f00" x="498" y="527"/><use href="#a6237" x="510" y="527"/></g>
<g fill="#000"><use href="#a672a" x="486" y="547"/><use href="#a5f00" x="498" y="547"/><use href="#a6237" x="510" y="547"/></g>
<g fill="#000"><use href="#a672a" x="486" y="567"/><use href="#a5f00" x="498" y="567"/><use href="#a6237" x="510" y="567"/></g>
<g fill="#000"><use href="#a672a" x="486" y="607"/><use href="#a5f00" x="498" y="607"/><use href="#a6237" x="510" y="607"/></g>
<g fill="#000"><use href="#a672a" x="486" y="627"/><use href="#a5f00" x="498" y="627"/><use href="#a6237" x="510" y="627"/></g>
<g fill="#000"><use href="#a672a" x="486" y="647"/><use href="#a5f00" x="498" y="647"/><use href="#a6237" x="510" y="647"/></g>
<g fill="#000"><use href="#a672a" x="486" y="667"/><use href="#a5f00" x="498" y="667"/><use href="#a6237" x="510" y="667"/></g>
<g fill="#000"><use href="#a672a" x="486" y="687"/><use href="#a5f00" x="498" y="687"/><use href="#a6237" x="510" y="687"/></g>
<g fill="#000"><use href="#a5f00" x="21" y="740"/><use href="#a59cb" x="33" y="740"/></g>
<g fill="#000"><use href="#a31" x="958" y="733"/><use href="#a31" x="964" y="733"/><use href="#a3a" x="972" y="733"/><use href="#a31" x="976" y="733"/><use href="#a35" x="982" y="733"/></g>
<g fill="#000"><use href="#a32" x="946" y="749"/><use href="#a30" x="952" y="749"/><use href="#a31" x="958" y="749"/><use href="#a38" x="964" y="749"/><use href="#a2f" x="970" y="749"/><use href="#a36" x="976" y="749"/><use href="#a2f" x="982" y="749"/><use href="#a31" x="988" y="749"/><use href="#a30" x="994" y="749"/></g>
</svg>
</body></html>
